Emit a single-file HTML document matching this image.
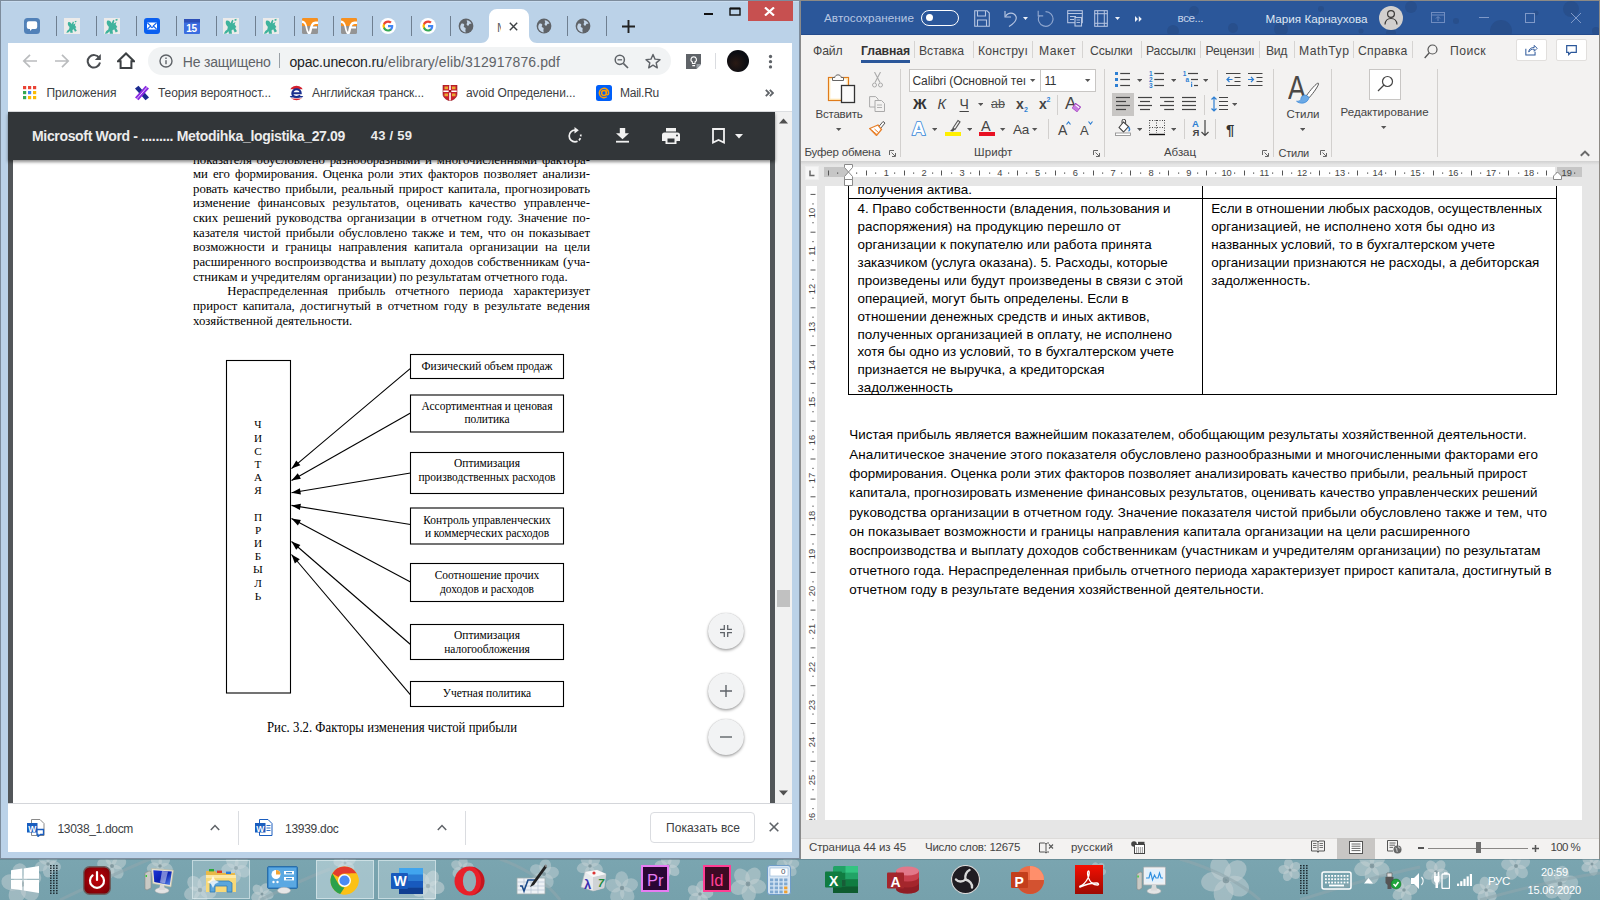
<!DOCTYPE html>
<html lang="ru"><head><meta charset="utf-8"><title>Desktop</title>
<style>
html,body{margin:0;padding:0}
body{width:1600px;height:900px;overflow:hidden;position:relative;background:#78a3ae;font-family:"Liberation Sans",sans-serif;}
.a{position:absolute;display:block}
.t{position:absolute;white-space:nowrap;line-height:1;margin:0;padding:0;color:#000}
</style></head>
<body>
<div class="a" style="left:0px;top:859px;width:1600px;height:41px;background:linear-gradient(#7aa5b0,#76a1ac);"></div>
<svg class="a" style="left:0;top:859px" width="1600" height="41" viewBox="0 0 1600 41"><ellipse cx="17.3" cy="34.5" rx="10.2" ry="8.2" transform="rotate(117 17.3 34.5)" fill="#c3d0d3" fill-opacity="0.52"/><ellipse cx="11.5" cy="23.4" rx="10.2" ry="8.2" transform="rotate(189 11.5 23.4)" fill="#c3d0d3" fill-opacity="0.52"/><ellipse cx="20.2" cy="14.5" rx="10.2" ry="8.2" transform="rotate(261 20.2 14.5)" fill="#c3d0d3" fill-opacity="0.52"/><ellipse cx="31.4" cy="20.1" rx="10.2" ry="8.2" transform="rotate(333 31.4 20.1)" fill="#c3d0d3" fill-opacity="0.52"/><ellipse cx="29.6" cy="32.4" rx="10.2" ry="8.2" transform="rotate(405 29.6 32.4)" fill="#c3d0d3" fill-opacity="0.52"/><circle cx="22" cy="25" r="2.8" fill="#5b737c" fill-opacity=".5"/><ellipse cx="44.0" cy="-0.5" rx="6.6" ry="5.2" transform="rotate(234 44.0 -0.5)" fill="#c3d0d3" fill-opacity="0.51"/><ellipse cx="52.0" cy="-0.5" rx="6.6" ry="5.2" transform="rotate(306 52.0 -0.5)" fill="#c3d0d3" fill-opacity="0.51"/><ellipse cx="54.5" cy="7.1" rx="6.6" ry="5.2" transform="rotate(378 54.5 7.1)" fill="#c3d0d3" fill-opacity="0.51"/><ellipse cx="48.0" cy="11.8" rx="6.6" ry="5.2" transform="rotate(450 48.0 11.8)" fill="#c3d0d3" fill-opacity="0.51"/><ellipse cx="41.5" cy="7.1" rx="6.6" ry="5.2" transform="rotate(522 41.5 7.1)" fill="#c3d0d3" fill-opacity="0.51"/><circle cx="48" cy="5" r="1.8" fill="#5b737c" fill-opacity=".5"/><ellipse cx="104.5" cy="5.3" rx="7.4" ry="5.9" transform="rotate(193 104.5 5.3)" fill="#c3d0d3" fill-opacity="0.54"/><ellipse cx="111.3" cy="-0.6" rx="7.4" ry="5.9" transform="rotate(265 111.3 -0.6)" fill="#c3d0d3" fill-opacity="0.54"/><ellipse cx="119.0" cy="4.0" rx="7.4" ry="5.9" transform="rotate(337 119.0 4.0)" fill="#c3d0d3" fill-opacity="0.54"/><ellipse cx="117.0" cy="12.8" rx="7.4" ry="5.9" transform="rotate(409 117.0 12.8)" fill="#c3d0d3" fill-opacity="0.54"/><ellipse cx="108.1" cy="13.6" rx="7.4" ry="5.9" transform="rotate(481 108.1 13.6)" fill="#c3d0d3" fill-opacity="0.54"/><circle cx="112" cy="7" r="2.0" fill="#5b737c" fill-opacity=".5"/><ellipse cx="166.4" cy="9.4" rx="6.6" ry="5.2" transform="rotate(21 166.4 9.4)" fill="#c3d0d3" fill-opacity="0.56"/><ellipse cx="159.7" cy="13.8" rx="6.6" ry="5.2" transform="rotate(93 159.7 13.8)" fill="#c3d0d3" fill-opacity="0.56"/><ellipse cx="153.4" cy="8.8" rx="6.6" ry="5.2" transform="rotate(165 153.4 8.8)" fill="#c3d0d3" fill-opacity="0.56"/><ellipse cx="156.3" cy="1.3" rx="6.6" ry="5.2" transform="rotate(237 156.3 1.3)" fill="#c3d0d3" fill-opacity="0.56"/><ellipse cx="164.3" cy="1.7" rx="6.6" ry="5.2" transform="rotate(309 164.3 1.7)" fill="#c3d0d3" fill-opacity="0.56"/><circle cx="160" cy="7" r="1.8" fill="#5b737c" fill-opacity=".5"/><ellipse cx="208.3" cy="33.0" rx="8.2" ry="6.6" transform="rotate(13 208.3 33.0)" fill="#c3d0d3" fill-opacity="0.55"/><ellipse cx="200.7" cy="39.5" rx="8.2" ry="6.6" transform="rotate(85 200.7 39.5)" fill="#c3d0d3" fill-opacity="0.55"/><ellipse cx="192.1" cy="34.3" rx="8.2" ry="6.6" transform="rotate(157 192.1 34.3)" fill="#c3d0d3" fill-opacity="0.55"/><ellipse cx="194.5" cy="24.5" rx="8.2" ry="6.6" transform="rotate(229 194.5 24.5)" fill="#c3d0d3" fill-opacity="0.55"/><ellipse cx="204.4" cy="23.8" rx="8.2" ry="6.6" transform="rotate(301 204.4 23.8)" fill="#c3d0d3" fill-opacity="0.55"/><circle cx="200" cy="31" r="2.2" fill="#5b737c" fill-opacity=".5"/><ellipse cx="242.9" cy="12.2" rx="7.4" ry="5.9" transform="rotate(25 242.9 12.2)" fill="#c3d0d3" fill-opacity="0.51"/><ellipse cx="235.1" cy="16.6" rx="7.4" ry="5.9" transform="rotate(97 235.1 16.6)" fill="#c3d0d3" fill-opacity="0.51"/><ellipse cx="228.5" cy="10.4" rx="7.4" ry="5.9" transform="rotate(169 228.5 10.4)" fill="#c3d0d3" fill-opacity="0.51"/><ellipse cx="232.3" cy="2.3" rx="7.4" ry="5.9" transform="rotate(241 232.3 2.3)" fill="#c3d0d3" fill-opacity="0.51"/><ellipse cx="241.2" cy="3.4" rx="7.4" ry="5.9" transform="rotate(313 241.2 3.4)" fill="#c3d0d3" fill-opacity="0.51"/><circle cx="236" cy="9" r="2.0" fill="#5b737c" fill-opacity=".5"/><ellipse cx="256.7" cy="37.7" rx="5.7" ry="4.6" transform="rotate(153 256.7 37.7)" fill="#c3d0d3" fill-opacity="0.60"/><ellipse cx="257.8" cy="30.8" rx="5.7" ry="4.6" transform="rotate(225 257.8 30.8)" fill="#c3d0d3" fill-opacity="0.60"/><ellipse cx="264.7" cy="29.7" rx="5.7" ry="4.6" transform="rotate(297 264.7 29.7)" fill="#c3d0d3" fill-opacity="0.60"/><ellipse cx="267.9" cy="35.9" rx="5.7" ry="4.6" transform="rotate(369 267.9 35.9)" fill="#c3d0d3" fill-opacity="0.60"/><ellipse cx="263.0" cy="40.9" rx="5.7" ry="4.6" transform="rotate(441 263.0 40.9)" fill="#c3d0d3" fill-opacity="0.60"/><circle cx="262" cy="35" r="1.5" fill="#5b737c" fill-opacity=".5"/><ellipse cx="349.2" cy="8.2" rx="5.7" ry="4.6" transform="rotate(45 349.2 8.2)" fill="#c3d0d3" fill-opacity="0.53"/><ellipse cx="342.3" cy="9.3" rx="5.7" ry="4.6" transform="rotate(117 342.3 9.3)" fill="#c3d0d3" fill-opacity="0.53"/><ellipse cx="339.1" cy="3.1" rx="5.7" ry="4.6" transform="rotate(189 339.1 3.1)" fill="#c3d0d3" fill-opacity="0.53"/><ellipse cx="344.0" cy="-1.9" rx="5.7" ry="4.6" transform="rotate(261 344.0 -1.9)" fill="#c3d0d3" fill-opacity="0.53"/><ellipse cx="350.3" cy="1.3" rx="5.7" ry="4.6" transform="rotate(333 350.3 1.3)" fill="#c3d0d3" fill-opacity="0.53"/><circle cx="345" cy="4" r="1.5" fill="#5b737c" fill-opacity=".5"/><ellipse cx="422.1" cy="20.9" rx="8.2" ry="6.6" transform="rotate(226 422.1 20.9)" fill="#c3d0d3" fill-opacity="0.61"/><ellipse cx="432.0" cy="19.5" rx="8.2" ry="6.6" transform="rotate(298 432.0 19.5)" fill="#c3d0d3" fill-opacity="0.61"/><ellipse cx="436.4" cy="28.4" rx="8.2" ry="6.6" transform="rotate(370 436.4 28.4)" fill="#c3d0d3" fill-opacity="0.61"/><ellipse cx="429.2" cy="35.4" rx="8.2" ry="6.6" transform="rotate(442 429.2 35.4)" fill="#c3d0d3" fill-opacity="0.61"/><ellipse cx="420.4" cy="30.8" rx="8.2" ry="6.6" transform="rotate(514 420.4 30.8)" fill="#c3d0d3" fill-opacity="0.61"/><circle cx="428" cy="27" r="2.2" fill="#5b737c" fill-opacity=".5"/><ellipse cx="456.7" cy="6.2" rx="5.7" ry="4.6" transform="rotate(208 456.7 6.2)" fill="#c3d0d3" fill-opacity="0.55"/><ellipse cx="463.0" cy="3.1" rx="5.7" ry="4.6" transform="rotate(280 463.0 3.1)" fill="#c3d0d3" fill-opacity="0.55"/><ellipse cx="467.9" cy="8.1" rx="5.7" ry="4.6" transform="rotate(352 467.9 8.1)" fill="#c3d0d3" fill-opacity="0.55"/><ellipse cx="464.6" cy="14.3" rx="5.7" ry="4.6" transform="rotate(424 464.6 14.3)" fill="#c3d0d3" fill-opacity="0.55"/><ellipse cx="457.7" cy="13.2" rx="5.7" ry="4.6" transform="rotate(496 457.7 13.2)" fill="#c3d0d3" fill-opacity="0.55"/><circle cx="462" cy="9" r="1.5" fill="#5b737c" fill-opacity=".5"/><ellipse cx="551.6" cy="13.8" rx="7.4" ry="5.9" transform="rotate(351 551.6 13.8)" fill="#c3d0d3" fill-opacity="0.51"/><ellipse cx="547.4" cy="21.8" rx="7.4" ry="5.9" transform="rotate(423 547.4 21.8)" fill="#c3d0d3" fill-opacity="0.51"/><ellipse cx="538.6" cy="20.4" rx="7.4" ry="5.9" transform="rotate(495 538.6 20.4)" fill="#c3d0d3" fill-opacity="0.51"/><ellipse cx="537.2" cy="11.5" rx="7.4" ry="5.9" transform="rotate(567 537.2 11.5)" fill="#c3d0d3" fill-opacity="0.51"/><ellipse cx="545.2" cy="7.4" rx="7.4" ry="5.9" transform="rotate(639 545.2 7.4)" fill="#c3d0d3" fill-opacity="0.51"/><circle cx="544" cy="15" r="2.0" fill="#5b737c" fill-opacity=".5"/><ellipse cx="594.3" cy="1.7" rx="6.6" ry="5.2" transform="rotate(309 594.3 1.7)" fill="#c3d0d3" fill-opacity="0.53"/><ellipse cx="596.4" cy="9.4" rx="6.6" ry="5.2" transform="rotate(381 596.4 9.4)" fill="#c3d0d3" fill-opacity="0.53"/><ellipse cx="589.7" cy="13.8" rx="6.6" ry="5.2" transform="rotate(453 589.7 13.8)" fill="#c3d0d3" fill-opacity="0.53"/><ellipse cx="583.4" cy="8.8" rx="6.6" ry="5.2" transform="rotate(525 583.4 8.8)" fill="#c3d0d3" fill-opacity="0.53"/><ellipse cx="586.3" cy="1.3" rx="6.6" ry="5.2" transform="rotate(597 586.3 1.3)" fill="#c3d0d3" fill-opacity="0.53"/><circle cx="590" cy="7" r="1.8" fill="#5b737c" fill-opacity=".5"/><ellipse cx="627.2" cy="35.7" rx="8.2" ry="6.6" transform="rotate(52 627.2 35.7)" fill="#c3d0d3" fill-opacity="0.51"/><ellipse cx="617.3" cy="36.1" rx="8.2" ry="6.6" transform="rotate(124 617.3 36.1)" fill="#c3d0d3" fill-opacity="0.51"/><ellipse cx="613.8" cy="26.7" rx="8.2" ry="6.6" transform="rotate(196 613.8 26.7)" fill="#c3d0d3" fill-opacity="0.51"/><ellipse cx="621.7" cy="20.5" rx="8.2" ry="6.6" transform="rotate(268 621.7 20.5)" fill="#c3d0d3" fill-opacity="0.51"/><ellipse cx="630.0" cy="26.1" rx="8.2" ry="6.6" transform="rotate(340 630.0 26.1)" fill="#c3d0d3" fill-opacity="0.51"/><circle cx="622" cy="29" r="2.2" fill="#5b737c" fill-opacity=".5"/><ellipse cx="665.6" cy="13.3" rx="6.6" ry="5.2" transform="rotate(111 665.6 13.3)" fill="#c3d0d3" fill-opacity="0.60"/><ellipse cx="661.2" cy="6.6" rx="6.6" ry="5.2" transform="rotate(183 661.2 6.6)" fill="#c3d0d3" fill-opacity="0.60"/><ellipse cx="666.2" cy="0.4" rx="6.6" ry="5.2" transform="rotate(255 666.2 0.4)" fill="#c3d0d3" fill-opacity="0.60"/><ellipse cx="673.7" cy="3.3" rx="6.6" ry="5.2" transform="rotate(327 673.7 3.3)" fill="#c3d0d3" fill-opacity="0.60"/><ellipse cx="673.3" cy="11.3" rx="6.6" ry="5.2" transform="rotate(399 673.3 11.3)" fill="#c3d0d3" fill-opacity="0.60"/><circle cx="668" cy="7" r="1.8" fill="#5b737c" fill-opacity=".5"/><ellipse cx="702.9" cy="41.2" rx="6.6" ry="5.2" transform="rotate(65 702.9 41.2)" fill="#c3d0d3" fill-opacity="0.57"/><ellipse cx="695.0" cy="39.6" rx="6.6" ry="5.2" transform="rotate(137 695.0 39.6)" fill="#c3d0d3" fill-opacity="0.57"/><ellipse cx="694.1" cy="31.7" rx="6.6" ry="5.2" transform="rotate(209 694.1 31.7)" fill="#c3d0d3" fill-opacity="0.57"/><ellipse cx="701.3" cy="28.3" rx="6.6" ry="5.2" transform="rotate(281 701.3 28.3)" fill="#c3d0d3" fill-opacity="0.57"/><ellipse cx="706.7" cy="34.2" rx="6.6" ry="5.2" transform="rotate(353 706.7 34.2)" fill="#c3d0d3" fill-opacity="0.57"/><circle cx="700" cy="35" r="1.8" fill="#5b737c" fill-opacity=".5"/><ellipse cx="742.0" cy="17.8" rx="9.0" ry="7.2" transform="rotate(230 742.0 17.8)" fill="#c3d0d3" fill-opacity="0.54"/><ellipse cx="752.9" cy="17.1" rx="9.0" ry="7.2" transform="rotate(302 752.9 17.1)" fill="#c3d0d3" fill-opacity="0.54"/><ellipse cx="757.1" cy="27.2" rx="9.0" ry="7.2" transform="rotate(374 757.1 27.2)" fill="#c3d0d3" fill-opacity="0.54"/><ellipse cx="748.7" cy="34.3" rx="9.0" ry="7.2" transform="rotate(446 748.7 34.3)" fill="#c3d0d3" fill-opacity="0.54"/><ellipse cx="739.3" cy="28.5" rx="9.0" ry="7.2" transform="rotate(518 739.3 28.5)" fill="#c3d0d3" fill-opacity="0.54"/><circle cx="748" cy="25" r="2.4" fill="#5b737c" fill-opacity=".5"/><ellipse cx="782.3" cy="5.3" rx="5.7" ry="4.6" transform="rotate(197 782.3 5.3)" fill="#c3d0d3" fill-opacity="0.51"/><ellipse cx="787.9" cy="1.1" rx="5.7" ry="4.6" transform="rotate(269 787.9 1.1)" fill="#c3d0d3" fill-opacity="0.51"/><ellipse cx="793.6" cy="5.1" rx="5.7" ry="4.6" transform="rotate(341 793.6 5.1)" fill="#c3d0d3" fill-opacity="0.51"/><ellipse cx="791.6" cy="11.8" rx="5.7" ry="4.6" transform="rotate(413 791.6 11.8)" fill="#c3d0d3" fill-opacity="0.51"/><ellipse cx="784.6" cy="11.9" rx="5.7" ry="4.6" transform="rotate(485 784.6 11.9)" fill="#c3d0d3" fill-opacity="0.51"/><circle cx="788" cy="7" r="1.5" fill="#5b737c" fill-opacity=".5"/><ellipse cx="1102.0" cy="12.6" rx="4.1" ry="3.3" transform="rotate(21 1102.0 12.6)" fill="#c3d0d3" fill-opacity="0.52"/><ellipse cx="1097.7" cy="15.2" rx="4.1" ry="3.3" transform="rotate(93 1097.7 15.2)" fill="#c3d0d3" fill-opacity="0.52"/><ellipse cx="1093.9" cy="12.1" rx="4.1" ry="3.3" transform="rotate(165 1093.9 12.1)" fill="#c3d0d3" fill-opacity="0.52"/><ellipse cx="1095.7" cy="7.4" rx="4.1" ry="3.3" transform="rotate(237 1095.7 7.4)" fill="#c3d0d3" fill-opacity="0.52"/><ellipse cx="1100.7" cy="7.7" rx="4.1" ry="3.3" transform="rotate(309 1100.7 7.7)" fill="#c3d0d3" fill-opacity="0.52"/><circle cx="1098" cy="11" r="1.1" fill="#5b737c" fill-opacity=".5"/><ellipse cx="1220.6" cy="9.5" rx="12.3" ry="9.8" transform="rotate(245 1220.6 9.5)" fill="#c3d0d3" fill-opacity="0.55"/><ellipse cx="1235.3" cy="12.3" rx="12.3" ry="9.8" transform="rotate(317 1235.3 12.3)" fill="#c3d0d3" fill-opacity="0.55"/><ellipse cx="1237.2" cy="27.1" rx="12.3" ry="9.8" transform="rotate(389 1237.2 27.1)" fill="#c3d0d3" fill-opacity="0.55"/><ellipse cx="1223.6" cy="33.5" rx="12.3" ry="9.8" transform="rotate(461 1223.6 33.5)" fill="#c3d0d3" fill-opacity="0.55"/><ellipse cx="1213.4" cy="22.6" rx="12.3" ry="9.8" transform="rotate(533 1213.4 22.6)" fill="#c3d0d3" fill-opacity="0.55"/><circle cx="1226" cy="21" r="3.3" fill="#5b737c" fill-opacity=".5"/><ellipse cx="1287.7" cy="16.5" rx="5.7" ry="4.6" transform="rotate(113 1287.7 16.5)" fill="#c3d0d3" fill-opacity="0.57"/><ellipse cx="1284.1" cy="10.5" rx="5.7" ry="4.6" transform="rotate(185 1284.1 10.5)" fill="#c3d0d3" fill-opacity="0.57"/><ellipse cx="1288.7" cy="5.2" rx="5.7" ry="4.6" transform="rotate(257 1288.7 5.2)" fill="#c3d0d3" fill-opacity="0.57"/><ellipse cx="1295.1" cy="7.9" rx="5.7" ry="4.6" transform="rotate(329 1295.1 7.9)" fill="#c3d0d3" fill-opacity="0.57"/><ellipse cx="1294.5" cy="14.9" rx="5.7" ry="4.6" transform="rotate(401 1294.5 14.9)" fill="#c3d0d3" fill-opacity="0.57"/><circle cx="1290" cy="11" r="1.5" fill="#5b737c" fill-opacity=".5"/><ellipse cx="1363.1" cy="9.7" rx="9.0" ry="7.2" transform="rotate(163 1363.1 9.7)" fill="#c3d0d3" fill-opacity="0.54"/><ellipse cx="1366.6" cy="-0.7" rx="9.0" ry="7.2" transform="rotate(235 1366.6 -0.7)" fill="#c3d0d3" fill-opacity="0.54"/><ellipse cx="1377.6" cy="-0.5" rx="9.0" ry="7.2" transform="rotate(307 1377.6 -0.5)" fill="#c3d0d3" fill-opacity="0.54"/><ellipse cx="1380.8" cy="10.1" rx="9.0" ry="7.2" transform="rotate(379 1380.8 10.1)" fill="#c3d0d3" fill-opacity="0.54"/><ellipse cx="1371.8" cy="16.3" rx="9.0" ry="7.2" transform="rotate(451 1371.8 16.3)" fill="#c3d0d3" fill-opacity="0.54"/><circle cx="1372" cy="7" r="2.4" fill="#5b737c" fill-opacity=".5"/><ellipse cx="1405.9" cy="24.5" rx="6.6" ry="5.2" transform="rotate(286 1405.9 24.5)" fill="#c3d0d3" fill-opacity="0.58"/><ellipse cx="1410.8" cy="30.7" rx="6.6" ry="5.2" transform="rotate(358 1410.8 30.7)" fill="#c3d0d3" fill-opacity="0.58"/><ellipse cx="1406.3" cy="37.4" rx="6.6" ry="5.2" transform="rotate(430 1406.3 37.4)" fill="#c3d0d3" fill-opacity="0.58"/><ellipse cx="1398.7" cy="35.2" rx="6.6" ry="5.2" transform="rotate(502 1398.7 35.2)" fill="#c3d0d3" fill-opacity="0.58"/><ellipse cx="1398.4" cy="27.2" rx="6.6" ry="5.2" transform="rotate(574 1398.4 27.2)" fill="#c3d0d3" fill-opacity="0.58"/><circle cx="1404" cy="31" r="1.8" fill="#5b737c" fill-opacity=".5"/><ellipse cx="1436.3" cy="19.8" rx="6.6" ry="5.2" transform="rotate(88 1436.3 19.8)" fill="#c3d0d3" fill-opacity="0.57"/><ellipse cx="1429.6" cy="15.3" rx="6.6" ry="5.2" transform="rotate(160 1429.6 15.3)" fill="#c3d0d3" fill-opacity="0.57"/><ellipse cx="1431.8" cy="7.7" rx="6.6" ry="5.2" transform="rotate(232 1431.8 7.7)" fill="#c3d0d3" fill-opacity="0.57"/><ellipse cx="1439.8" cy="7.4" rx="6.6" ry="5.2" transform="rotate(304 1439.8 7.4)" fill="#c3d0d3" fill-opacity="0.57"/><ellipse cx="1442.5" cy="14.9" rx="6.6" ry="5.2" transform="rotate(376 1442.5 14.9)" fill="#c3d0d3" fill-opacity="0.57"/><circle cx="1436" cy="13" r="1.8" fill="#5b737c" fill-opacity=".5"/><ellipse cx="1479.3" cy="29.9" rx="6.6" ry="5.2" transform="rotate(189 1479.3 29.9)" fill="#c3d0d3" fill-opacity="0.61"/><ellipse cx="1484.9" cy="24.3" rx="6.6" ry="5.2" transform="rotate(261 1484.9 24.3)" fill="#c3d0d3" fill-opacity="0.61"/><ellipse cx="1492.1" cy="27.9" rx="6.6" ry="5.2" transform="rotate(333 1492.1 27.9)" fill="#c3d0d3" fill-opacity="0.61"/><ellipse cx="1490.8" cy="35.8" rx="6.6" ry="5.2" transform="rotate(405 1490.8 35.8)" fill="#c3d0d3" fill-opacity="0.61"/><ellipse cx="1482.9" cy="37.1" rx="6.6" ry="5.2" transform="rotate(477 1482.9 37.1)" fill="#c3d0d3" fill-opacity="0.61"/><circle cx="1486" cy="31" r="1.8" fill="#5b737c" fill-opacity=".5"/><ellipse cx="1515.0" cy="-0.6" rx="7.4" ry="5.9" transform="rotate(262 1515.0 -0.6)" fill="#c3d0d3" fill-opacity="0.53"/><ellipse cx="1522.9" cy="3.7" rx="7.4" ry="5.9" transform="rotate(334 1522.9 3.7)" fill="#c3d0d3" fill-opacity="0.53"/><ellipse cx="1521.3" cy="12.5" rx="7.4" ry="5.9" transform="rotate(406 1521.3 12.5)" fill="#c3d0d3" fill-opacity="0.53"/><ellipse cx="1512.4" cy="13.7" rx="7.4" ry="5.9" transform="rotate(478 1512.4 13.7)" fill="#c3d0d3" fill-opacity="0.53"/><ellipse cx="1508.5" cy="5.6" rx="7.4" ry="5.9" transform="rotate(550 1508.5 5.6)" fill="#c3d0d3" fill-opacity="0.53"/><circle cx="1516" cy="7" r="2.0" fill="#5b737c" fill-opacity=".5"/><ellipse cx="1569.3" cy="23.8" rx="9.0" ry="7.2" transform="rotate(353 1569.3 23.8)" fill="#c3d0d3" fill-opacity="0.51"/><ellipse cx="1564.0" cy="33.5" rx="9.0" ry="7.2" transform="rotate(425 1564.0 33.5)" fill="#c3d0d3" fill-opacity="0.51"/><ellipse cx="1553.2" cy="31.4" rx="9.0" ry="7.2" transform="rotate(497 1553.2 31.4)" fill="#c3d0d3" fill-opacity="0.51"/><ellipse cx="1551.8" cy="20.5" rx="9.0" ry="7.2" transform="rotate(569 1551.8 20.5)" fill="#c3d0d3" fill-opacity="0.51"/><ellipse cx="1561.7" cy="15.8" rx="9.0" ry="7.2" transform="rotate(641 1561.7 15.8)" fill="#c3d0d3" fill-opacity="0.51"/><circle cx="1560" cy="25" r="2.4" fill="#5b737c" fill-opacity=".5"/><ellipse cx="1586.8" cy="7.9" rx="5.7" ry="4.6" transform="rotate(150 1586.8 7.9)" fill="#c3d0d3" fill-opacity="0.59"/><ellipse cx="1587.6" cy="1.0" rx="5.7" ry="4.6" transform="rotate(222 1587.6 1.0)" fill="#c3d0d3" fill-opacity="0.59"/><ellipse cx="1594.5" cy="-0.4" rx="5.7" ry="4.6" transform="rotate(294 1594.5 -0.4)" fill="#c3d0d3" fill-opacity="0.59"/><ellipse cx="1597.9" cy="5.7" rx="5.7" ry="4.6" transform="rotate(366 1597.9 5.7)" fill="#c3d0d3" fill-opacity="0.59"/><ellipse cx="1593.2" cy="10.8" rx="5.7" ry="4.6" transform="rotate(438 1593.2 10.8)" fill="#c3d0d3" fill-opacity="0.59"/><circle cx="1592" cy="5" r="1.5" fill="#5b737c" fill-opacity=".5"/><path d="M60 41Q115.0 14.5 150 0" fill="none" stroke="#8fa6ad" stroke-opacity=".6" stroke-width="3"/><path d="M260 41Q305.0 19.5 330 10" fill="none" stroke="#8fa6ad" stroke-opacity=".6" stroke-width="3"/><path d="M500 0Q540.0 14.5 560 41" fill="none" stroke="#8fa6ad" stroke-opacity=".6" stroke-width="3"/><path d="M1180 0Q1230.0 14.5 1260 41" fill="none" stroke="#8fa6ad" stroke-opacity=".6" stroke-width="3"/><path d="M1300 41Q1370.0 18.5 1420 8" fill="none" stroke="#8fa6ad" stroke-opacity=".6" stroke-width="3"/><path d="M1480 41Q1550.0 21.5 1600 14" fill="none" stroke="#8fa6ad" stroke-opacity=".6" stroke-width="3"/></svg>
<div class="a" style="left:0px;top:859px;width:1600px;height:1px;background:rgba(90,120,132,.55);"></div>
<svg class="a" style="left:11px;top:866px;" width="28" height="27" viewBox="0 0 28 27"><path d="M0 4.2 11.3 2.6V12.7H0zM12.7 2.4 28 0V12.7H12.7zM0 14.1H11.3V24.3L0 22.7zM12.7 14.1H28V27L12.7 24.5z" fill="#fff"/></svg>
<svg class="a" style="left:50px;top:865px;" width="9" height="31" viewBox="0 0 9 31"><g fill="#1d2a30"><rect x="0" y="0.0" width="1.6" height="1.4"/><rect x="0" y="2.5" width="1.6" height="1.4"/><rect x="0" y="5.0" width="1.6" height="1.4"/><rect x="0" y="7.5" width="1.6" height="1.4"/><rect x="0" y="10.0" width="1.6" height="1.4"/><rect x="0" y="12.5" width="1.6" height="1.4"/><rect x="0" y="15.0" width="1.6" height="1.4"/><rect x="0" y="17.5" width="1.6" height="1.4"/><rect x="0" y="20.0" width="1.6" height="1.4"/><rect x="0" y="22.5" width="1.6" height="1.4"/><rect x="0" y="25.0" width="1.6" height="1.4"/><rect x="0" y="27.5" width="1.6" height="1.4"/><rect x="3" y="0.0" width="1.6" height="1.4"/><rect x="3" y="2.5" width="1.6" height="1.4"/><rect x="3" y="5.0" width="1.6" height="1.4"/><rect x="3" y="7.5" width="1.6" height="1.4"/><rect x="3" y="10.0" width="1.6" height="1.4"/><rect x="3" y="12.5" width="1.6" height="1.4"/><rect x="3" y="15.0" width="1.6" height="1.4"/><rect x="3" y="17.5" width="1.6" height="1.4"/><rect x="3" y="20.0" width="1.6" height="1.4"/><rect x="3" y="22.5" width="1.6" height="1.4"/><rect x="3" y="25.0" width="1.6" height="1.4"/><rect x="3" y="27.5" width="1.6" height="1.4"/><rect x="6" y="0.0" width="1.6" height="1.4"/><rect x="6" y="2.5" width="1.6" height="1.4"/><rect x="6" y="5.0" width="1.6" height="1.4"/><rect x="6" y="7.5" width="1.6" height="1.4"/><rect x="6" y="10.0" width="1.6" height="1.4"/><rect x="6" y="12.5" width="1.6" height="1.4"/><rect x="6" y="15.0" width="1.6" height="1.4"/><rect x="6" y="17.5" width="1.6" height="1.4"/><rect x="6" y="20.0" width="1.6" height="1.4"/><rect x="6" y="22.5" width="1.6" height="1.4"/><rect x="6" y="25.0" width="1.6" height="1.4"/><rect x="6" y="27.5" width="1.6" height="1.4"/></g></svg>
<svg class="a" style="left:1300px;top:865px;" width="9" height="31" viewBox="0 0 9 31"><g fill="#1d2a30"><rect x="0" y="0.0" width="1.6" height="1.4"/><rect x="0" y="2.5" width="1.6" height="1.4"/><rect x="0" y="5.0" width="1.6" height="1.4"/><rect x="0" y="7.5" width="1.6" height="1.4"/><rect x="0" y="10.0" width="1.6" height="1.4"/><rect x="0" y="12.5" width="1.6" height="1.4"/><rect x="0" y="15.0" width="1.6" height="1.4"/><rect x="0" y="17.5" width="1.6" height="1.4"/><rect x="0" y="20.0" width="1.6" height="1.4"/><rect x="0" y="22.5" width="1.6" height="1.4"/><rect x="0" y="25.0" width="1.6" height="1.4"/><rect x="0" y="27.5" width="1.6" height="1.4"/><rect x="3" y="0.0" width="1.6" height="1.4"/><rect x="3" y="2.5" width="1.6" height="1.4"/><rect x="3" y="5.0" width="1.6" height="1.4"/><rect x="3" y="7.5" width="1.6" height="1.4"/><rect x="3" y="10.0" width="1.6" height="1.4"/><rect x="3" y="12.5" width="1.6" height="1.4"/><rect x="3" y="15.0" width="1.6" height="1.4"/><rect x="3" y="17.5" width="1.6" height="1.4"/><rect x="3" y="20.0" width="1.6" height="1.4"/><rect x="3" y="22.5" width="1.6" height="1.4"/><rect x="3" y="25.0" width="1.6" height="1.4"/><rect x="3" y="27.5" width="1.6" height="1.4"/><rect x="6" y="0.0" width="1.6" height="1.4"/><rect x="6" y="2.5" width="1.6" height="1.4"/><rect x="6" y="5.0" width="1.6" height="1.4"/><rect x="6" y="7.5" width="1.6" height="1.4"/><rect x="6" y="10.0" width="1.6" height="1.4"/><rect x="6" y="12.5" width="1.6" height="1.4"/><rect x="6" y="15.0" width="1.6" height="1.4"/><rect x="6" y="17.5" width="1.6" height="1.4"/><rect x="6" y="20.0" width="1.6" height="1.4"/><rect x="6" y="22.5" width="1.6" height="1.4"/><rect x="6" y="25.0" width="1.6" height="1.4"/><rect x="6" y="27.5" width="1.6" height="1.4"/></g></svg>
<svg class="a" style="left:83px;top:866px;" width="28" height="29" viewBox="0 0 28 29"><defs><radialGradient id="pw" cx=".5" cy=".45" r=".6"><stop offset="0" stop-color="#c4000a"/><stop offset="1" stop-color="#7d0006"/></radialGradient></defs><rect x=".7" y=".7" width="26.6" height="27.6" rx="6" fill="url(#pw)" stroke="#6a6060" stroke-width="1.4"/><path d="M9.6 9.4a7 7 0 1 0 8.8 0" fill="none" stroke="#fff" stroke-width="2.2" stroke-linecap="round"/><path d="M14 6v8" stroke="#fff" stroke-width="2.2" stroke-linecap="round"/></svg>
<svg class="a" style="left:144px;top:866px;" width="31" height="28" viewBox="0 0 31 28"><defs><linearGradient id="scr" x1="0" y1="0" x2="1" y2="1"><stop offset="0" stop-color="#1d35d8"/><stop offset=".5" stop-color="#0a1fb0"/><stop offset="1" stop-color="#5b8df0"/></linearGradient></defs><path d="M1 7l4-2 2 .5V22l-4 2-2-1z" fill="#c9c9c4" stroke="#8a8a86" stroke-width=".6"/><rect x="1.6" y="9" width="1.4" height="2" fill="#3c3"/><path d="M7.5 2.5 29.5 4.2 27 21 8.8 17.5z" fill="#e9e6d4" stroke="#b8b49c" stroke-width=".6"/><path d="M9.3 4.3 27.8 5.6 25.8 19 10.3 16z" fill="url(#scr)"/><path d="M18 5l6 .4-3 12-5-1z" fill="#fff" opacity=".45"/><ellipse cx="18" cy="24.5" rx="7" ry="3" fill="#e4e4e4" stroke="#aaa" stroke-width=".5"/><path d="M16 19h4l1 5h-6z" fill="#d8d8d8"/></svg>
<div class="a" style="left:192px;top:860px;width:58px;height:39px;background:rgba(225,238,242,0.22);box-shadow:inset 0 0 0 1px rgba(235,245,248,.55);"></div>
<svg class="a" style="left:205px;top:866px;" width="32" height="28" viewBox="0 0 32 28"><path d="M1 5h9l2 2h18v19H1z" fill="#e9b948"/><path d="M1 9h30v17H1z" fill="#f8d978"/><path d="M1 9h30v3H1z" fill="#fce9a8"/><rect x="4" y="3" width="5" height="2.4" fill="#2aa836"/><rect x="12" y="4.6" width="5" height="2.4" fill="#d83b2a"/><rect x="21" y="5.6" width="5" height="2.4" fill="#2a7bd8"/><path d="M5 26v-9l3-2h16l3 2v9h-5v-6H10v6z" fill="#5aa6dc" stroke="#2d78b4" stroke-width=".8"/><path d="M6 14l2-4 2 4 4 2-4 2-2 4-2-4-4-2z" fill="#fff" opacity=".8"/></svg>
<svg class="a" style="left:267px;top:866px;" width="31" height="28" viewBox="0 0 31 28"><rect x=".5" y=".5" width="30" height="22" rx="1.5" fill="#3f8fd0" stroke="#2a6ea8"/><rect x="2" y="2" width="27" height="19" fill="#5aa8e2"/><circle cx="9" cy="8.5" r="4.5" fill="#fff"/><path d="M9 8.5V4a4.5 4.5 0 0 1 4.5 4.5z" fill="#f4a431"/><rect x="17" y="5" width="10" height="3.4" fill="#fff"/><rect x="17" y="11" width="10" height="3.4" fill="#fff"/><rect x="19" y="6" width="6" height="1.4" fill="#3f8fd0"/><rect x="19" y="12" width="6" height="1.4" fill="#3f8fd0"/><circle cx="6.5" cy="16" r="1.2" fill="#fff"/><circle cx="10.5" cy="16" r="1.2" fill="#fff"/><ellipse cx="17" cy="24.5" rx="6.5" ry="3.2" fill="#e6e6e6" stroke="#aaa" stroke-width=".5"/></svg>
<div class="a" style="left:316px;top:860px;width:58px;height:39px;background:rgba(225,238,242,0.42);box-shadow:inset 0 0 0 1px rgba(235,245,248,.55);"></div>
<svg class="a" style="left:330px;top:866px;" width="29" height="29" viewBox="0 0 29 29"><circle cx="14.5" cy="14.5" r="14" fill="#fbc116"/><path d="M14.5 .5A14 14 0 0 1 26.7 7.5H14.5a7 7 0 0 0-6.1 3.6L2.4 7.4A14 14 0 0 1 14.5 .5z" fill="#e33b2e"/><path d="M2.4 7.4 8.5 18a7 7 0 0 0 6 3.5l-4.3 6.4A14 14 0 0 1 2.4 7.4z" fill="#2ba14b"/><path d="M26.7 7.5A14 14 0 0 1 12 28.3L18.5 18a7 7 0 0 0 0-7L20.5 7.5z" fill="#fbc116"/><circle cx="14.5" cy="14.5" r="6.5" fill="#fff"/><circle cx="14.5" cy="14.5" r="5.1" fill="#4a8af4"/></svg>
<div class="a" style="left:378px;top:860px;width:58px;height:39px;background:rgba(225,238,242,0.3);box-shadow:inset 0 0 0 1px rgba(235,245,248,.55);"></div>
<svg class="a" style="left:391px;top:868px;" width="32" height="26" viewBox="0 0 32 26"><rect x="8" y="0" width="24" height="26" rx="1.5" fill="#2b7cd3"/><rect x="8" y="0" width="24" height="6.5" fill="#41a5ee"/><rect x="8" y="13" width="24" height="6.5" fill="#185abd"/><rect x="8" y="19.5" width="24" height="6.5" fill="#103f91"/><rect x="0" y="5" width="17" height="16" rx="1" fill="#185abd"/></svg>
<div class="t" style="top:873.7px;font-size:14px;left:393.5px;font-weight:700;color:#fff;">W</div>
<svg class="a" style="left:454px;top:866px;" width="31" height="30" viewBox="0 0 31 30"><ellipse cx="15.5" cy="15" rx="15" ry="14.6" fill="#e8202a"/><ellipse cx="15.5" cy="15" rx="6.6" ry="10.6" fill="#8fb0b8"/><path d="M15.5 .4a15 14.6 0 0 1 0 29.2A11 14 0 0 0 15.5 .4z" fill="#a70e16" opacity=".55"/></svg>
<svg class="a" style="left:515px;top:864px;" width="32" height="31" viewBox="0 0 32 31"><path d="M2 14h28v16H2z" fill="#eef2f6" stroke="#9aa" stroke-width=".8"/><path d="M2 18h28M2 22h28M2 26h28M9 14v16M16 14v16M23 14v16" stroke="#b4c4d4" stroke-width=".7"/><path d="M5 22l2 0 2 5 4-11h9" fill="none" stroke="#1b4a8a" stroke-width="1.6"/><path d="M30 1 17 19l-2 4 4-2L32 3z" fill="#222"/><path d="M30 1l2 2" stroke="#888" stroke-width="2"/></svg>
<svg class="a" style="left:579px;top:868px;" width="29" height="24" viewBox="0 0 29 24"><path d="M6 4 18 2l9 4-2 14-11 3L2 19z" fill="#e8eaec" stroke="#b8bcc0" stroke-width=".6"/><path d="M14 9l0 14 11-3 2-14z" fill="#cfd3d6"/><path d="M6 4l8 5 13-3-9-4z" fill="#f6f7f8"/><circle cx="15" cy="5" r="1.6" fill="#d33"/></svg>
<div class="t" style="top:877.55px;font-size:13px;left:584px;font-weight:700;color:#3a2fb0;">λ</div>
<div class="t" style="top:878.24px;font-size:11px;left:598px;font-weight:700;color:#1f8a3a;font-style:italic;">7</div>
<div class="a" style="left:641px;top:865px;width:28px;height:27px;background:#2a0634;border:2px solid #e77cf3;box-sizing:border-box;"></div>
<div class="t" style="top:872.08px;font-size:16.5px;left:647px;color:#e77cf3;letter-spacing:-0.05px;">Pr</div>
<div class="a" style="left:703px;top:865px;width:28px;height:27px;background:#3d0a24;border:2px solid #ff3f94;box-sizing:border-box;"></div>
<div class="t" style="top:872.08px;font-size:16.5px;left:710px;color:#ff3f94;letter-spacing:-0.383px;">Id</div>
<svg class="a" style="left:767px;top:865px;" width="24" height="30" viewBox="0 0 24 30"><rect x=".5" y=".5" width="23" height="29" rx="2.5" fill="#d7e6f4" stroke="#6f9cc8"/><rect x="3" y="3" width="18" height="8" fill="#fff" stroke="#8fb4d8" stroke-width=".6"/><rect x="3.0" y="13.5" width="3.3" height="2.8" fill="#7fa8d0"/><rect x="3.0" y="17.5" width="3.3" height="2.8" fill="#7fa8d0"/><rect x="3.0" y="21.5" width="3.3" height="2.8" fill="#7fa8d0"/><rect x="3.0" y="25.5" width="3.3" height="2.8" fill="#7fa8d0"/><rect x="7.7" y="13.5" width="3.3" height="2.8" fill="#7fa8d0"/><rect x="7.7" y="17.5" width="3.3" height="2.8" fill="#7fa8d0"/><rect x="7.7" y="21.5" width="3.3" height="2.8" fill="#7fa8d0"/><rect x="7.7" y="25.5" width="3.3" height="2.8" fill="#7fa8d0"/><rect x="12.4" y="13.5" width="3.3" height="2.8" fill="#7fa8d0"/><rect x="12.4" y="17.5" width="3.3" height="2.8" fill="#7fa8d0"/><rect x="12.4" y="21.5" width="3.3" height="2.8" fill="#7fa8d0"/><rect x="12.4" y="25.5" width="3.3" height="2.8" fill="#7fa8d0"/><rect x="17.1" y="13.5" width="3.3" height="2.8" fill="#7fa8d0"/><rect x="17.1" y="17.5" width="3.3" height="2.8" fill="#7fa8d0"/><rect x="17.1" y="21.5" width="3.3" height="2.8" fill="#f0a030"/><rect x="17.1" y="25.5" width="3.3" height="2.8" fill="#f0a030"/></svg>
<div class="t" style="top:867.78px;font-size:8px;left:781px;color:#456;">0</div>
<svg class="a" style="left:825px;top:866px;" width="33" height="27" viewBox="0 0 33 27"><rect x="8" y="0" width="25" height="27" rx="1.5" fill="#21a366"/><rect x="20.5" y="0" width="12.5" height="6.8" fill="#33c481"/><rect x="8" y="6.8" width="12.5" height="6.8" fill="#107c41"/><rect x="20.5" y="6.8" width="12.5" height="6.8" fill="#21a366"/><rect x="8" y="13.6" width="25" height="6.8" fill="#185c37"/><rect x="20.5" y="13.6" width="12.5" height="6.8" fill="#107c41"/><rect x="8" y="20.4" width="25" height="6.6" fill="#0e5c2f"/><rect x="0" y="5.5" width="17" height="16" rx="1" fill="#107c41"/></svg>
<div class="t" style="top:873.7px;font-size:14px;left:829px;font-weight:700;color:#fff;">X</div>
<svg class="a" style="left:887px;top:866px;" width="32" height="28" viewBox="0 0 32 28"><path d="M9 5v18a11.5 4.6 0 0 0 23 0V5z" fill="#a4262c"/><path d="M9 11a11.5 4.6 0 0 0 23 0V5H9z" fill="#c8404e"/><ellipse cx="20.5" cy="5" rx="11.5" ry="4.6" fill="#e2788a"/><path d="M9 17a11.5 4.6 0 0 0 23 0v6a11.5 4.6 0 0 1-23 0z" fill="#8f1d25"/><rect x="0" y="6.5" width="17" height="16" rx="1" fill="#a4262c"/></svg>
<div class="t" style="top:874.7px;font-size:14px;left:890.5px;font-weight:700;color:#fff;">A</div>
<svg class="a" style="left:951px;top:865px;" width="29" height="29" viewBox="0 0 29 29"><circle cx="14.5" cy="14.5" r="14" fill="#1f1c22" stroke="#d8d8d8" stroke-width="1.2"/><g fill="none" stroke="#d8d8d8" stroke-width="2.4" stroke-linecap="round"><path d="M14.5 14.5c-1-4 1-8 4-9.5"/><path d="M14.5 14.5c4 1 7 4.500 6.500 8"/><path d="M14.5 14.5c-3 3-7.500 2.500-9.500 0"/></g></svg>
<svg class="a" style="left:1011px;top:866px;" width="33" height="28" viewBox="0 0 33 28"><circle cx="19" cy="14" r="14" fill="#ed6c47"/><path d="M19 0a14 14 0 0 1 14 14H19z" fill="#ff8f6b"/><path d="M5 14a14 14 0 0 0 28 0z" fill="#d35230"/><rect x="0" y="6" width="17" height="16" rx="1" fill="#c43e1c"/></svg>
<div class="t" style="top:874.7px;font-size:14px;left:1014.5px;font-weight:700;color:#fff;">P</div>
<svg class="a" style="left:1075px;top:865px;" width="28" height="29" viewBox="0 0 28 29"><defs><linearGradient id="ac" x1="0" y1="0" x2="0" y2="1"><stop offset="0" stop-color="#f40f02"/><stop offset="1" stop-color="#9d0a02"/></linearGradient></defs><rect width="28" height="29" fill="url(#ac)"/><path d="M5 21c3-1 6-4 8-8 1.500-3 1.500-7 .5-7s-1.500 3 0 7c1.500 4 5 7 9 7 2 0 1-2-1-2-5 0-11 1.500-16 4-1 .6-1 -.5-.5-1z" fill="none" stroke="#fff" stroke-width="1.3"/></svg>
<svg class="a" style="left:1136px;top:866px;" width="31" height="29" viewBox="0 0 31 29"><path d="M1 8l3-2 2 .5V22l-3 2-2-1z" fill="#c9c9c4" stroke="#8a8a86" stroke-width=".6"/><rect x="1.400" y="9.500" width="1.400" height="2" fill="#3c3"/><rect x="7.500" y="1" width="22" height="18" rx="1" fill="#eef0f2" stroke="#a8acb0" stroke-width=".8"/><rect x="9.500" y="3" width="18" height="13.500" fill="#e3f0fb"/><path d="M10 12h3l1.500-6 2 8 2-5 1.500 3h2l1.500-5 1.500 5h2" fill="none" stroke="#2f8fe0" stroke-width="1.1"/><ellipse cx="18" cy="25" rx="7" ry="3" fill="#e4e4e4" stroke="#aaa" stroke-width=".5"/><path d="M16 19h4l1 5.500h-6z" fill="#d8d8d8"/></svg>
<svg class="a" style="left:1321px;top:871px;" width="31" height="19" viewBox="0 0 31 19"><rect x="1" y="1" width="29" height="17" rx="2" fill="none" stroke="#fff" stroke-width="1.500"/><rect x="4.0" y="4.0" width="1.800" height="1.800" fill="#fff"/><rect x="4.0" y="7.3" width="1.800" height="1.800" fill="#fff"/><rect x="4.0" y="10.6" width="1.800" height="1.800" fill="#fff"/><rect x="7.1" y="4.0" width="1.800" height="1.800" fill="#fff"/><rect x="7.1" y="7.3" width="1.800" height="1.800" fill="#fff"/><rect x="7.1" y="10.6" width="1.800" height="1.800" fill="#fff"/><rect x="10.2" y="4.0" width="1.800" height="1.800" fill="#fff"/><rect x="10.2" y="7.3" width="1.800" height="1.800" fill="#fff"/><rect x="10.2" y="10.6" width="1.800" height="1.800" fill="#fff"/><rect x="13.3" y="4.0" width="1.800" height="1.800" fill="#fff"/><rect x="13.3" y="7.3" width="1.800" height="1.800" fill="#fff"/><rect x="13.3" y="10.6" width="1.800" height="1.800" fill="#fff"/><rect x="16.4" y="4.0" width="1.800" height="1.800" fill="#fff"/><rect x="16.4" y="7.3" width="1.800" height="1.800" fill="#fff"/><rect x="16.4" y="10.6" width="1.800" height="1.800" fill="#fff"/><rect x="19.5" y="4.0" width="1.800" height="1.800" fill="#fff"/><rect x="19.5" y="7.3" width="1.800" height="1.800" fill="#fff"/><rect x="19.5" y="10.6" width="1.800" height="1.800" fill="#fff"/><rect x="22.6" y="4.0" width="1.800" height="1.800" fill="#fff"/><rect x="22.6" y="7.3" width="1.800" height="1.800" fill="#fff"/><rect x="22.6" y="10.6" width="1.800" height="1.800" fill="#fff"/><rect x="25.7" y="4.0" width="1.800" height="1.800" fill="#fff"/><rect x="25.7" y="7.3" width="1.800" height="1.800" fill="#fff"/><rect x="25.7" y="10.6" width="1.800" height="1.800" fill="#fff"/><rect x="8" y="13.600" width="15" height="1.800" fill="#fff"/></svg>
<svg class="a" style="left:1364px;top:878px;" width="9" height="6" viewBox="0 0 9 6"><path d="M0 5.500 4.500 0 9 5.500z" fill="#fff"/></svg>
<svg class="a" style="left:1384px;top:872px;" width="18" height="18" viewBox="0 0 18 18"><path d="M3 1h5v4H3z" fill="#ddd" stroke="#555" stroke-width=".6"/><path d="M1.500 5h8v6l-2 2v4h-4v-4l-2-2z" fill="#555"/><circle cx="12" cy="12" r="5" fill="#1fa53a" stroke="#0c6a20" stroke-width=".5"/><path d="M9.500 12l2 2 3-4" fill="none" stroke="#fff" stroke-width="1.500"/></svg>
<svg class="a" style="left:1411px;top:873px;" width="14" height="16" viewBox="0 0 14 16"><path d="M0 5h3l5-5v16l-5-5H0z" fill="#fff"/><path d="M10.500 4a6 6 0 0 1 0 8" fill="none" stroke="#fff" stroke-width="1.200"/></svg>
<svg class="a" style="left:1434px;top:872px;" width="16" height="17" viewBox="0 0 16 17"><path d="M1 0v4M4.500 0v4" stroke="#fff" stroke-width="1.400"/><path d="M0 4h5.500v5l-1.500 2v5h-2.500v-5L0 9z" fill="#fff"/><rect x="8" y="2" width="7.500" height="14.500" rx="1" fill="none" stroke="#fff" stroke-width="1.300"/><rect x="10" y=".3" width="3.500" height="1.700" fill="#fff"/></svg>
<svg class="a" style="left:1457px;top:874px;" width="16" height="13" viewBox="0 0 16 13"><rect x="0.0" y="9.6" width="2.200" height="2.4" fill="#fff"/><rect x="3.2" y="7.2" width="2.200" height="4.8" fill="#fff"/><rect x="6.4" y="4.8" width="2.200" height="7.2" fill="#fff"/><rect x="9.6" y="2.4" width="2.200" height="9.6" fill="#fff"/><rect x="12.8" y="0.0" width="2.200" height="12.0" fill="#fff"/></svg>
<div class="t" style="top:875.82px;font-size:11.5px;left:1488px;color:#fff;letter-spacing:-0.344px;">РУС</div>
<div class="t" style="top:867.24px;font-size:11px;left:1541px;color:#fff;letter-spacing:-0.106px;">20:59</div>
<div class="t" style="top:884.74px;font-size:11px;left:1527.5px;color:#fff;letter-spacing:-0.156px;">15.06.2020</div>
<div class="a" style="left:0px;top:0px;width:800px;height:859px;background:#bbd2e8;box-shadow:inset 0 0 0 1px #7d8c9c;"></div>
<div class="a" style="left:1px;top:1px;width:798px;height:1px;background:#c9dcef;"></div>
<div class="a" style="left:748px;top:1px;width:45px;height:20px;background:#c75050;"></div>
<svg class="a" style="left:764px;top:7px;" width="11" height="9" viewBox="0 0 11 9"><path d="M1 .5 10 8.500M10 .5 1 8.500" stroke="#fff" stroke-width="2.200"/></svg>
<svg class="a" style="left:729px;top:7px;" width="12" height="9" viewBox="0 0 12 9"><rect x="1" y="1.500" width="10" height="6.500" fill="none" stroke="#111" stroke-width="1.400"/><rect x="1" y=".5" width="10" height="2" fill="#111"/></svg>
<div class="a" style="left:704px;top:12.5px;width:9px;height:2px;background:#111;"></div>
<div class="a" style="left:55.5px;top:16px;width:1.2px;height:20px;background:#6f7f90;"></div>
<div class="a" style="left:95.5px;top:16px;width:1.2px;height:20px;background:#6f7f90;"></div>
<div class="a" style="left:135.5px;top:16px;width:1.2px;height:20px;background:#6f7f90;"></div>
<div class="a" style="left:175.5px;top:16px;width:1.2px;height:20px;background:#6f7f90;"></div>
<div class="a" style="left:215.5px;top:16px;width:1.2px;height:20px;background:#6f7f90;"></div>
<div class="a" style="left:255.0px;top:16px;width:1.2px;height:20px;background:#6f7f90;"></div>
<div class="a" style="left:294.0px;top:16px;width:1.2px;height:20px;background:#6f7f90;"></div>
<div class="a" style="left:333.2px;top:16px;width:1.2px;height:20px;background:#6f7f90;"></div>
<div class="a" style="left:372.0px;top:16px;width:1.2px;height:20px;background:#6f7f90;"></div>
<div class="a" style="left:411.0px;top:16px;width:1.2px;height:20px;background:#6f7f90;"></div>
<div class="a" style="left:450.0px;top:16px;width:1.2px;height:20px;background:#6f7f90;"></div>
<div class="a" style="left:567.0px;top:16px;width:1.2px;height:20px;background:#6f7f90;"></div>
<div class="a" style="left:606.0px;top:16px;width:1.2px;height:20px;background:#6f7f90;"></div>
<svg class="a" style="left:24px;top:18px;" width="16" height="16" viewBox="0 0 16 16"><rect width="16" height="16" rx="3.500" fill="#5181b8"/><path d="M2.800 5.300a2 2 0 0 1 2-2h6.400a2 2 0 0 1 2 2v3.700a2 2 0 0 1-2 2H8l-2 1.900V11H4.800a2 2 0 0 1-2-2z" fill="#fff"/></svg>
<svg class="a" style="left:64px;top:18px;" width="16" height="16" viewBox="0 0 16 16"><rect width="16" height="16" fill="#f0ede9" fill-opacity=".92"/><g transform="translate(1.60 2.10) scale(0.8)" fill="#3fb39d"><path d="M3.200 2.800c1.800-1 3.800.4 4.300 2.500l1.700-3.500 1.300.8-.9 3 2.900-1.700-.9 2.600 1.800 2.400-1.300 1 1.900 3.400-2.300 1.200-1.500-3.200-1.700 1.200.5 3.300H5.800l-.1-2.500-2.400 2.300-2.500.2 1.500-2.900 2-1.500.6-2.700C3.300 7.500 2 5 3.200 2.800z"/><path d="M11.300 1.500 13.300.7l.4 1.500-1.800.8z"/></g></svg>
<svg class="a" style="left:104px;top:18px;" width="16" height="16" viewBox="0 0 16 16"><rect width="16" height="16" fill="#f0ede9" fill-opacity=".92"/><g transform="translate(0.00 0.00) scale(1)" fill="#3fb39d"><path d="M3.200 2.800c1.800-1 3.800.4 4.300 2.500l1.700-3.500 1.300.8-.9 3 2.900-1.700-.9 2.600 1.800 2.400-1.300 1 1.900 3.400-2.300 1.200-1.500-3.200-1.700 1.200.5 3.300H5.800l-.1-2.500-2.400 2.300-2.500.2 1.500-2.900 2-1.500.6-2.700C3.300 7.500 2 5 3.200 2.800z"/><path d="M11.300 1.500 13.300.7l.4 1.500-1.800.8z"/></g></svg>
<svg class="a" style="left:144px;top:18px;" width="16" height="16" viewBox="0 0 16 16"><rect width="16" height="16" rx="3" fill="#0a5ff0"/><rect x="3" y="4.500" width="10" height="7" rx=".8" fill="#fff"/><path d="M3.500 5l3.500 3.200M12.500 5 9 8.200M3.500 11l3-2.800M12.500 11l-3-2.800M6 8l2 1.500L10 8" fill="none" stroke="#0a5ff0" stroke-width="1.100"/></svg>
<svg class="a" style="left:184px;top:18px;" width="16" height="16" viewBox="0 0 16 16"><rect y="1" width="16" height="15" rx="1" fill="#3b6de0"/><rect y="1" width="16" height="3.500" fill="#2c4fb8"/></svg>
<div class="t" style="top:23.59px;font-size:10px;left:186.3px;font-weight:700;color:#fff;letter-spacing:-.3px;">15</div>
<svg class="a" style="left:223px;top:18px;" width="16" height="16" viewBox="0 0 16 16"><rect width="16" height="16" fill="#f0ede9" fill-opacity=".92"/><g transform="translate(0.00 0.00) scale(1)" fill="#3fb39d"><path d="M3.200 2.800c1.800-1 3.800.4 4.300 2.500l1.700-3.500 1.300.8-.9 3 2.900-1.700-.9 2.600 1.800 2.400-1.300 1 1.900 3.400-2.300 1.200-1.500-3.200-1.700 1.200.5 3.300H5.800l-.1-2.500-2.400 2.300-2.500.2 1.500-2.900 2-1.500.6-2.700C3.300 7.500 2 5 3.200 2.800z"/><path d="M11.300 1.500 13.300.7l.4 1.500-1.800.8z"/></g></svg>
<svg class="a" style="left:262.5px;top:18px;" width="16" height="16" viewBox="0 0 16 16"><rect width="16" height="16" fill="#f0ede9" fill-opacity=".92"/><g transform="translate(0.00 0.00) scale(1)" fill="#3fb39d"><path d="M3.200 2.800c1.800-1 3.800.4 4.300 2.500l1.700-3.500 1.300.8-.9 3 2.900-1.700-.9 2.600 1.800 2.400-1.300 1 1.900 3.400-2.300 1.200-1.500-3.200-1.700 1.200.5 3.300H5.800l-.1-2.500-2.400 2.300-2.500.2 1.500-2.900 2-1.500.6-2.700C3.300 7.500 2 5 3.200 2.800z"/><path d="M11.300 1.500 13.300.7l.4 1.500-1.800.8z"/></g></svg>
<svg class="a" style="left:302px;top:18px;" width="16" height="16" viewBox="0 0 16 16"><rect width="16" height="16" rx="1.500" fill="#949494"/><path d="M0 1.500A1.500 1.500 0 0 1 1.500 0h13A1.500 1.500 0 0 1 16 1.500V8H0z" fill="#f7901e"/><path d="M0 2.500c3 .3 4.300 2.500 5 5.500.5 2 .8 4.500 2 6 .6-3 1.200-7.500 3.500-9.500 1.500-1.200 3.500-1 5.500-1V6c-2 0-3.300-.2-4.300.8-.4.400-.7 1-.9 1.700H15v2h-4.800c-.5 2-.7 4-1.700 5.500H6C4.500 14 4 11 3.400 8.500 2.800 6.500 2 5 0 5z" fill="#fff"/></svg>
<svg class="a" style="left:341px;top:18px;" width="16" height="16" viewBox="0 0 16 16"><rect width="16" height="16" rx="1.500" fill="#949494"/><path d="M0 1.500A1.500 1.500 0 0 1 1.500 0h13A1.500 1.500 0 0 1 16 1.500V8H0z" fill="#f7901e"/><path d="M0 2.500c3 .3 4.300 2.500 5 5.500.5 2 .8 4.500 2 6 .6-3 1.200-7.500 3.500-9.500 1.500-1.200 3.500-1 5.500-1V6c-2 0-3.300-.2-4.300.8-.4.400-.7 1-.9 1.700H15v2h-4.800c-.5 2-.7 4-1.700 5.500H6C4.500 14 4 11 3.400 8.500 2.800 6.500 2 5 0 5z" fill="#fff"/></svg>
<svg class="a" style="left:380px;top:18px;" width="16" height="16" viewBox="0 0 16 16"><circle cx="8" cy="8" r="8" fill="#fff"/><g transform="translate(2.400 2.400) scale(.7)"><path d="M15.500 8.200c0-.5 0-1-.1-1.500H8v3h4.200a3.600 3.600 0 0 1-1.600 2.400v2h2.500c1.500-1.400 2.400-3.400 2.400-5.900z" fill="#4285f4"/><path d="M8 16c2.100 0 3.900-.7 5.200-1.900l-2.500-2c-.7.500-1.600.8-2.700.8-2 0-3.800-1.400-4.400-3.300H1v2C2.300 14.200 4.900 16 8 16z" fill="#34a853"/><path d="M3.600 9.600a4.800 4.800 0 0 1 0-3.100v-2H1a8 8 0 0 0 0 7.200z" fill="#fbbc05"/><path d="M8 3.200c1.200 0 2.200.4 3 1.200l2.300-2.300C11.900.8 10.100 0 8 0 4.900 0 2.300 1.800 1 4.400l2.600 2C4.200 4.600 6 3.200 8 3.200z" fill="#ea4335"/></g></svg>
<svg class="a" style="left:419.5px;top:18px;" width="16" height="16" viewBox="0 0 16 16"><circle cx="8" cy="8" r="8" fill="#fff"/><g transform="translate(2.400 2.400) scale(.7)"><path d="M15.500 8.200c0-.5 0-1-.1-1.500H8v3h4.200a3.600 3.600 0 0 1-1.600 2.400v2h2.500c1.500-1.400 2.400-3.400 2.400-5.900z" fill="#4285f4"/><path d="M8 16c2.100 0 3.900-.7 5.200-1.900l-2.500-2c-.7.500-1.600.8-2.700.8-2 0-3.800-1.400-4.400-3.300H1v2C2.300 14.200 4.900 16 8 16z" fill="#34a853"/><path d="M3.600 9.600a4.800 4.800 0 0 1 0-3.100v-2H1a8 8 0 0 0 0 7.200z" fill="#fbbc05"/><path d="M8 3.200c1.200 0 2.200.4 3 1.200l2.300-2.300C11.900.8 10.100 0 8 0 4.900 0 2.300 1.800 1 4.400l2.600 2C4.200 4.600 6 3.200 8 3.200z" fill="#ea4335"/></g></svg>
<svg class="a" style="left:457.5px;top:18px;" width="16" height="16" viewBox="0 0 16 16"><circle cx="8" cy="8" r="7.400" fill="#5f6368"/><path d="M3.500 5.500c1-.2 2.600.2 2.800 1.200.2.900-.9 1.300-.5 2.100.4.700 1.500.5 1.800 1.400.3.800-.3 1.500-.2 2.300.1.700.4 1.300.2 1.900-2.200-.3-4.600-2-5.300-4.400-.3-1.600.2-3.300 1.200-4.500zM8.800 2.200c2 .2 3.800 1.500 4.700 3.300-.8.300-1.500 0-2.100.4-.6.500-.3 1.400-1 1.700-.9.300-1.700-.4-1.800-1.300-.1-.8.700-1.200.6-2-.1-.7-.7-1.300-.4-2.100z" fill="#c3d5e8"/></svg>
<svg class="a" style="left:481px;top:9px" width="56" height="34" viewBox="0 0 56 34"><path d="M0 34c4.500 0 8-3.500 8-8V8a8 8 0 0 1 8-8h24a8 8 0 0 1 8 8v18c0 4.500 3.500 8 8 8z" fill="#fff"/></svg>
<div class="t" style="top:21.89px;font-size:12px;left:497px;color:#5f6368;width:3.500px;overflow:hidden;">M</div>
<svg class="a" style="left:509px;top:21.5px;" width="9" height="9" viewBox="0 0 9 9"><path d="M.8 .8 8.200 8.200M8.200 .8 .8 8.200" stroke="#3c4043" stroke-width="1.400"/></svg>
<svg class="a" style="left:535.5px;top:18px;" width="16" height="16" viewBox="0 0 16 16"><circle cx="8" cy="8" r="7.400" fill="#5f6368"/><path d="M3.500 5.500c1-.2 2.600.2 2.800 1.200.2.900-.9 1.300-.5 2.100.4.700 1.500.5 1.800 1.400.3.800-.3 1.500-.2 2.300.1.700.4 1.300.2 1.900-2.200-.3-4.600-2-5.300-4.400-.3-1.600.2-3.300 1.200-4.500zM8.800 2.200c2 .2 3.800 1.500 4.700 3.300-.8.300-1.500 0-2.100.4-.6.500-.3 1.400-1 1.700-.9.300-1.700-.4-1.800-1.300-.1-.8.700-1.200.6-2-.1-.7-.7-1.300-.4-2.100z" fill="#c3d5e8"/></svg>
<svg class="a" style="left:574.5px;top:18px;" width="16" height="16" viewBox="0 0 16 16"><circle cx="8" cy="8" r="7.400" fill="#5f6368"/><path d="M3.500 5.500c1-.2 2.600.2 2.800 1.200.2.900-.9 1.300-.5 2.100.4.700 1.500.5 1.800 1.400.3.800-.3 1.500-.2 2.300.1.700.4 1.300.2 1.900-2.200-.3-4.600-2-5.300-4.400-.3-1.600.2-3.300 1.200-4.500zM8.800 2.200c2 .2 3.800 1.500 4.700 3.300-.8.300-1.500 0-2.100.4-.6.500-.3 1.400-1 1.700-.9.300-1.700-.4-1.800-1.300-.1-.8.700-1.200.6-2-.1-.7-.7-1.300-.4-2.100z" fill="#c3d5e8"/></svg>
<svg class="a" style="left:622px;top:20px;" width="13" height="13" viewBox="0 0 13 13"><path d="M6.500 0v13M0 6.500h13" stroke="#222" stroke-width="1.900"/></svg>
<div class="a" style="left:8px;top:43px;width:784px;height:69px;background:#fff;"></div>
<div class="a" style="left:8px;top:111px;width:784px;height:1px;background:#dcdee1;"></div>
<svg class="a" style="left:22px;top:53px;" width="16" height="16" viewBox="0 0 16 16"><path d="M15 8H2.500M8 1.800 1.800 8 8 14.200" fill="none" stroke="#babcbe" stroke-width="1.700"/></svg>
<svg class="a" style="left:54px;top:53px;" width="16" height="16" viewBox="0 0 16 16"><path d="M1 8h12.500M8 1.800 14.200 8 8 14.200" fill="none" stroke="#babcbe" stroke-width="1.700"/></svg>
<svg class="a" style="left:86px;top:53px;" width="16" height="16" viewBox="0 0 16 16"><path d="M13.300 5.200A6.200 6.200 0 1 0 14 9.500" fill="none" stroke="#4a4d51" stroke-width="2"/><path d="M14.800 1v6h-6z" fill="#4a4d51"/></svg>
<svg class="a" style="left:117px;top:52px;" width="18" height="17" viewBox="0 0 18 17"><path d="M1 9.200 9 1.500l8 7.700h-2.600V16H3.600V9.200z" fill="none" stroke="#3c4043" stroke-width="2" stroke-linejoin="miter"/></svg>
<div class="a" style="left:147.5px;top:47px;width:523px;height:27.5px;background:#f1f3f4;border-radius:14px;"></div>
<svg class="a" style="left:159px;top:54px;" width="14" height="14" viewBox="0 0 14 14"><circle cx="7" cy="7" r="6" fill="none" stroke="#5f6368" stroke-width="1.400"/><rect x="6.300" y="6.200" width="1.400" height="4" fill="#5f6368"/><rect x="6.300" y="3.500" width="1.400" height="1.500" fill="#5f6368"/></svg>
<div class="t" style="top:54.7px;font-size:14px;left:182.8px;color:#5f6368;letter-spacing:-0.2px;">Не защищено</div>
<div class="a" style="left:279.2px;top:53px;width:1px;height:15px;background:#9aa0a6;"></div>
<div class="t" style="top:54.7px;font-size:14px;left:289.4px;color:#202124;letter-spacing:-0.167px;">opac.unecon.ru</div>
<div class="t" style="top:54.7px;font-size:14px;left:384px;color:#5f6368;letter-spacing:0.114px;">/elibrary/elib/312917876.pdf</div>
<svg class="a" style="left:614px;top:54px;" width="15" height="15" viewBox="0 0 15 15"><circle cx="5.800" cy="5.800" r="4.600" fill="none" stroke="#5f6368" stroke-width="1.500"/><path d="M9.300 9.300 14 14" stroke="#5f6368" stroke-width="1.700"/><path d="M3.500 5.800h4.600" stroke="#5f6368" stroke-width="1.300"/></svg>
<svg class="a" style="left:645px;top:53px;" width="16" height="16" viewBox="0 0 16 16"><path d="M8 1.500l2 4.600 5 .5-3.800 3.300 1.100 4.900L8 12.200l-4.300 2.600 1.100-4.900L1 6.600l5-.5z" fill="none" stroke="#5f6368" stroke-width="1.400" stroke-linejoin="round"/></svg>
<svg class="a" style="left:685.5px;top:54px;" width="15.5" height="15" viewBox="0 0 15.5 15"><path d="M0 0h15.500v10l-5 5H0z" fill="#5f6368"/><path d="M10.500 15v-5h5z" fill="#9aa0a6"/><path d="M7.700 2.300a3.300 3.300 0 0 0-1.800 6.100v1.700h3.600V8.400a3.300 3.300 0 0 0-1.800-6.100zM6.300 11h2.800v1.200H6.300z" fill="#fff"/><path d="M7.700 3.600a2 2 0 0 0-.8 3.900v1.400h1.600V7.500a2 2 0 0 0-.8-3.900z" fill="#5f6368"/></svg>
<div class="a" style="left:715px;top:53px;width:1px;height:16px;background:#dadce0;"></div>
<div class="a" style="left:727px;top:50px;width:22px;height:22px;background:radial-gradient(circle at 40% 60%,#2a1a14 0,#0a0c12 60%);border-radius:11px;"></div>
<svg class="a" style="left:768px;top:54px;" width="5" height="15" viewBox="0 0 5 15"><circle cx="2.500" cy="2.500" r="1.650" fill="#5f6368"/><circle cx="2.500" cy="7.700" r="1.650" fill="#5f6368"/><circle cx="2.500" cy="12.900" r="1.650" fill="#5f6368"/></svg>
<svg class="a" style="left:23px;top:86px;" width="14" height="14" viewBox="0 0 14 14"><rect x="0" y="0" width="3.200" height="3.200" fill="#ea4335"/><rect x="5" y="0" width="3.200" height="3.200" fill="#ea4335"/><rect x="10" y="0" width="3.200" height="3.200" fill="#ea4335"/><rect x="0" y="5" width="3.200" height="3.200" fill="#34a853"/><rect x="5" y="5" width="3.200" height="3.200" fill="#4285f4"/><rect x="10" y="5" width="3.200" height="3.200" fill="#fbbc05"/><rect x="0" y="10" width="3.200" height="3.200" fill="#34a853"/><rect x="5" y="10" width="3.200" height="3.200" fill="#fbbc05"/><rect x="10" y="10" width="3.200" height="3.200" fill="#fbbc05"/></svg>
<div class="t" style="top:87.39px;font-size:12px;left:46.5px;color:#3c4043;letter-spacing:-0.022px;">Приложения</div>
<svg class="a" style="left:134px;top:85px;" width="16" height="16" viewBox="0 0 16 16"><path d="M1 3.500 4.500 .8 15 12.500 11.500 15.200z" fill="#1b2a90"/><path d="M15 3.500 11.500 .8 1 12.500 4.500 15.200z" fill="#8a2be2"/><path d="M13 2.300 2.800 13.800" stroke="#e9c4ff" stroke-width="1"/></svg>
<div class="t" style="top:87.39px;font-size:12px;left:158px;color:#3c4043;letter-spacing:-0.097px;">Теория вероятност...</div>
<svg class="a" style="left:289px;top:85px;" width="15" height="16" viewBox="0 0 15 16"><defs><clipPath id="ec"><circle cx="7.500" cy="8" r="7.300"/></clipPath></defs><g clip-path="url(#ec)"><rect width="15" height="16" fill="#fff"/><rect width="15" height="4.200" fill="#d3202f"/><rect y="11" width="15" height="1.700" fill="#1b2f8f"/><rect y="12.700" width="15" height="1.300" fill="#fff"/><rect y="13.600" width="15" height="2.400" fill="#d3202f"/><path d="M3.300 8.300h8.400c0-2.500-1.800-4-4.200-4S3.300 5.900 3.300 8.300s1.900 3.700 4.300 3.700c1.500 0 2.800-.5 3.600-1.500" fill="none" stroke="#1b2f8f" stroke-width="2.100"/></g></svg>
<div class="t" style="top:87.39px;font-size:12px;left:312px;color:#3c4043;letter-spacing:-0.095px;">Английская транск...</div>
<svg class="a" style="left:442px;top:85px;" width="16" height="16" viewBox="0 0 16 16"><path d="M1 0h14v9c0 4-4 6-7 7-3-1-7-3-7-7z" fill="#c8202e" stroke="#8f1520" stroke-width=".6"/><path d="M7.200 .3h1.600v15.300H7.200zM1.300 5.500h13.400v1.600H1.300z" fill="#fff"/><path d="M2.500 1.500h3.500v2.800H2.500zM10 1.500h3.500v2.800H10zM2.500 8.500h3.500v2.800H2.500zM10 8.500h3.500v2.800H10z" fill="#f0c030" fill-opacity=".85"/><rect x="6.700" y="5" width="2.600" height="2.600" fill="#a01020"/></svg>
<div class="t" style="top:87.39px;font-size:12px;left:466px;color:#3c4043;letter-spacing:-0.091px;">avoid Определени...</div>
<svg class="a" style="left:596px;top:85px;" width="16" height="16" viewBox="0 0 16 16"><rect width="16" height="16" rx="2.500" fill="#005ff9"/><circle cx="8" cy="8" r="2.400" fill="none" stroke="#ff9e00" stroke-width="1.500"/><path d="M10.400 5.500v3.300c0 1.500 2.300 1.500 2.300-.8a4.700 4.700 0 1 0-1.900 3.800" fill="none" stroke="#ff9e00" stroke-width="1.400"/></svg>
<div class="t" style="top:87.39px;font-size:12px;left:620px;color:#3c4043;letter-spacing:-0.241px;">Mail.Ru</div>
<svg class="a" style="left:765px;top:89px;" width="9" height="8" viewBox="0 0 9 8"><path d="M.8 .8 4 4 .8 7.200M4.800 .8 8 4 4.800 7.200" fill="none" stroke="#5f6368" stroke-width="1.800"/></svg>
<div class="a" style="left:8px;top:112px;width:767px;height:691px;background:#525659;"></div>
<div class="a" style="left:13px;top:160px;width:757px;height:643px;background:#fff;"></div>
<div class="a" style="left:775px;top:112px;width:17px;height:691px;background:#f1f1f1;"></div>
<svg class="a" style="left:779px;top:118px;" width="9" height="6" viewBox="0 0 9 6"><path d="M0 5.500 4.500 .5 9 5.500z" fill="#505050"/></svg>
<svg class="a" style="left:779px;top:790px;" width="9" height="6" viewBox="0 0 9 6"><path d="M0 .5 4.500 5.500 9 .5z" fill="#505050"/></svg>
<div class="a" style="left:777px;top:590px;width:13px;height:17px;background:#c1c1c1;"></div>
<div class="t" style="left:193px;top:154.15px;font-size:12.78px;font-family:'Liberation Serif',serif;width:397px;text-align:justify;text-align-last:justify;white-space:normal;height:12.78px;overflow:visible;">показателя обусловлено разнообразными и многочисленными фактора-</div>
<div class="t" style="left:193px;top:168.11px;font-size:12.78px;font-family:'Liberation Serif',serif;width:397px;text-align:justify;text-align-last:justify;white-space:normal;height:12.78px;overflow:visible;">ми его формирования. Оценка роли этих факторов позволяет анализи-</div>
<div class="t" style="left:193px;top:182.77px;font-size:12.78px;font-family:'Liberation Serif',serif;width:397px;text-align:justify;text-align-last:justify;white-space:normal;height:12.78px;overflow:visible;">ровать качество прибыли, реальный прирост капитала, прогнозировать</div>
<div class="t" style="left:193px;top:197.43px;font-size:12.78px;font-family:'Liberation Serif',serif;width:397px;text-align:justify;text-align-last:justify;white-space:normal;height:12.78px;overflow:visible;">изменение финансовых результатов, оценивать качество управленче-</div>
<div class="t" style="left:193px;top:212.09px;font-size:12.78px;font-family:'Liberation Serif',serif;width:397px;text-align:justify;text-align-last:justify;white-space:normal;height:12.78px;overflow:visible;">ских решений руководства организации в отчетном году. Значение по-</div>
<div class="t" style="left:193px;top:226.75px;font-size:12.78px;font-family:'Liberation Serif',serif;width:397px;text-align:justify;text-align-last:justify;white-space:normal;height:12.78px;overflow:visible;">казателя чистой прибыли обусловлено также и тем, что он показывает</div>
<div class="t" style="left:193px;top:241.41px;font-size:12.78px;font-family:'Liberation Serif',serif;width:397px;text-align:justify;text-align-last:justify;white-space:normal;height:12.78px;overflow:visible;">возможности и границы направления капитала организации на цели</div>
<div class="t" style="left:193px;top:256.07px;font-size:12.78px;font-family:'Liberation Serif',serif;width:397px;text-align:justify;text-align-last:justify;white-space:normal;height:12.78px;overflow:visible;">расширенного воспроизводства и выплату доходов собственникам (уча-</div>
<div class="t" style="left:193px;top:270.73px;font-size:12.78px;font-family:'Liberation Serif',serif;">стникам и учредителям организации) по результатам отчетного года.</div>
<div class="t" style="left:227.2px;top:285.39px;font-size:12.78px;font-family:'Liberation Serif',serif;width:362.8px;text-align:justify;text-align-last:justify;white-space:normal;height:12.78px;overflow:visible;">Нераспределенная прибыль отчетного периода характеризует</div>
<div class="t" style="left:193px;top:300.05px;font-size:12.78px;font-family:'Liberation Serif',serif;width:397px;text-align:justify;text-align-last:justify;white-space:normal;height:12.78px;overflow:visible;">прирост капитала, достигнутый в отчетном году в результате ведения</div>
<div class="t" style="left:193px;top:314.71px;font-size:12.78px;font-family:'Liberation Serif',serif;">хозяйственной деятельности.</div>
<svg class="a" style="left:0;top:0" width="800" height="800" viewBox="0 0 800 800"><g fill="none" stroke="#000" stroke-width="1.100"><rect x="226.500" y="360.500" width="64" height="332.500"/><rect x="410.500" y="354.5" width="153" height="24.0"/><rect x="410.500" y="395" width="153" height="37"/><rect x="410.500" y="452.5" width="153" height="41.0"/><rect x="410.500" y="508" width="153" height="36"/><rect x="410.500" y="563.5" width="153" height="38.0"/><rect x="410.500" y="624.5" width="153" height="35.0"/><rect x="410.500" y="681.5" width="153" height="25.0"/><path d="M410.5 368.3L291.5 468.6"/><path d="M410.5 413L291.5 480.4"/><path d="M410.5 473L291.5 492.8"/><path d="M410.5 524.5L291.5 505.4"/><path d="M410.5 582L291.5 518.5"/><path d="M410.5 644.5L291.5 541.5"/><path d="M410.5 694.9L291.5 554.5"/></g><path d="M291.5 468.6L300.4 465.2L296.3 460.4z" fill="#000"/><path d="M291.5 480.4L300.9 478.7L297.8 473.2z" fill="#000"/><path d="M291.5 492.8L300.9 494.5L299.9 488.2z" fill="#000"/><path d="M291.5 505.4L299.9 510.0L300.9 503.7z" fill="#000"/><path d="M291.5 518.5L297.9 525.6L300.9 519.9z" fill="#000"/><path d="M291.5 541.5L296.2 549.8L300.4 545.0z" fill="#000"/><path d="M291.5 554.5L294.9 563.4L299.8 559.3z" fill="#000"/></svg>
<div class="t" style="left:410.5px;width:153px;text-align:center;top:360.92px;font-size:11.44px;font-family:'Liberation Serif',serif;">Физический объем продаж</div>
<div class="t" style="left:410.5px;width:153px;text-align:center;top:401.42px;font-size:11.44px;font-family:'Liberation Serif',serif;">Ассортиментная и ценовая</div>
<div class="t" style="left:410.5px;width:153px;text-align:center;top:414.22px;font-size:11.44px;font-family:'Liberation Serif',serif;">политика</div>
<div class="t" style="left:410.5px;width:153px;text-align:center;top:458.22px;font-size:11.44px;font-family:'Liberation Serif',serif;">Оптимизация</div>
<div class="t" style="left:410.5px;width:153px;text-align:center;top:472.22px;font-size:11.44px;font-family:'Liberation Serif',serif;">производственных расходов</div>
<div class="t" style="left:410.5px;width:153px;text-align:center;top:514.52px;font-size:11.44px;font-family:'Liberation Serif',serif;">Контроль управленческих</div>
<div class="t" style="left:410.5px;width:153px;text-align:center;top:528.22px;font-size:11.44px;font-family:'Liberation Serif',serif;">и коммерческих расходов</div>
<div class="t" style="left:410.5px;width:153px;text-align:center;top:570.42px;font-size:11.44px;font-family:'Liberation Serif',serif;">Соотношение прочих</div>
<div class="t" style="left:410.5px;width:153px;text-align:center;top:584.22px;font-size:11.44px;font-family:'Liberation Serif',serif;">доходов и расходов</div>
<div class="t" style="left:410.5px;width:153px;text-align:center;top:630.22px;font-size:11.44px;font-family:'Liberation Serif',serif;">Оптимизация</div>
<div class="t" style="left:410.5px;width:153px;text-align:center;top:644.22px;font-size:11.44px;font-family:'Liberation Serif',serif;">налогообложения</div>
<div class="t" style="left:410.5px;width:153px;text-align:center;top:688.22px;font-size:11.44px;font-family:'Liberation Serif',serif;">Учетная политика</div>
<div class="t" style="left:248px;width:20px;text-align:center;top:418.82px;font-size:11.2px;font-family:'Liberation Serif',serif;">Ч</div>
<div class="t" style="left:248px;width:20px;text-align:center;top:433.22px;font-size:11.2px;font-family:'Liberation Serif',serif;">И</div>
<div class="t" style="left:248px;width:20px;text-align:center;top:446.12px;font-size:11.2px;font-family:'Liberation Serif',serif;">С</div>
<div class="t" style="left:248px;width:20px;text-align:center;top:458.72px;font-size:11.2px;font-family:'Liberation Serif',serif;">Т</div>
<div class="t" style="left:248px;width:20px;text-align:center;top:471.82px;font-size:11.2px;font-family:'Liberation Serif',serif;">А</div>
<div class="t" style="left:248px;width:20px;text-align:center;top:484.92px;font-size:11.2px;font-family:'Liberation Serif',serif;">Я</div>
<div class="t" style="left:248px;width:20px;text-align:center;top:512.42px;font-size:11.2px;font-family:'Liberation Serif',serif;">П</div>
<div class="t" style="left:248px;width:20px;text-align:center;top:525.12px;font-size:11.2px;font-family:'Liberation Serif',serif;">Р</div>
<div class="t" style="left:248px;width:20px;text-align:center;top:538.22px;font-size:11.2px;font-family:'Liberation Serif',serif;">И</div>
<div class="t" style="left:248px;width:20px;text-align:center;top:551.12px;font-size:11.2px;font-family:'Liberation Serif',serif;">Б</div>
<div class="t" style="left:248px;width:20px;text-align:center;top:564.22px;font-size:11.2px;font-family:'Liberation Serif',serif;">Ы</div>
<div class="t" style="left:248px;width:20px;text-align:center;top:577.92px;font-size:11.2px;font-family:'Liberation Serif',serif;">Л</div>
<div class="t" style="left:248px;width:20px;text-align:center;top:591.22px;font-size:11.2px;font-family:'Liberation Serif',serif;">Ь</div>
<div class="t" style="top:720.02px;font-size:14.3px;left:266.6px;font-family:'Liberation Serif',serif;transform:scaleX(.8937);transform-origin:left center;">Рис. 3.2. Факторы изменения чистой прибыли</div>
<div class="a" style="left:708px;top:612.7px;width:36px;height:36px;background:#f2f3f4;border-radius:18px;box-shadow:0 1.500px 3px rgba(0,0,0,.35),0 0 1px rgba(0,0,0,.25);"></div>
<svg class="a" style="left:720px;top:624.7px;" width="12" height="12" viewBox="0 0 12 12"><path d="M4.300 0v4.300H0M7.700 0v4.300H12M4.300 12V7.700H0M7.700 12V7.700H12" fill="none" stroke="#5f6368" stroke-width="1.300"/></svg>
<div class="a" style="left:708px;top:672.7px;width:36px;height:36px;background:#f2f3f4;border-radius:18px;box-shadow:0 1.500px 3px rgba(0,0,0,.35),0 0 1px rgba(0,0,0,.25);"></div>
<svg class="a" style="left:720px;top:684.7px;" width="12" height="12" viewBox="0 0 12 12"><path d="M6 0v12M0 6h12" stroke="#5f6368" stroke-width="1.400"/></svg>
<div class="a" style="left:708px;top:718.7px;width:36px;height:36px;background:#f2f3f4;border-radius:18px;box-shadow:0 1.500px 3px rgba(0,0,0,.35),0 0 1px rgba(0,0,0,.25);"></div>
<svg class="a" style="left:720px;top:730.7px;" width="12" height="12" viewBox="0 0 12 12"><path d="M0 6h12" stroke="#5f6368" stroke-width="1.400"/></svg>
<div class="a" style="left:8px;top:112px;width:767px;height:48px;background:#323639;box-shadow:0 2px 3px rgba(0,0,0,.45);"></div>
<div class="t" style="top:128.9px;font-size:14px;left:32px;font-weight:700;color:#ececec;letter-spacing:-0.334px;">Microsoft Word - ......... Metodihka_logistika_27.09</div>
<div class="t" style="top:129.35px;font-size:13px;left:370.7px;font-weight:700;color:#ececec;letter-spacing:0.248px;">43 / 59</div>
<svg class="a" style="left:567px;top:127px;" width="16" height="17" viewBox="0 0 16 17"><path d="M8 3.200A5.800 5.800 0 0 0 8 14.800" fill="none" stroke="#f1f1f1" stroke-width="1.700"/><path d="M8 14.800A5.800 5.800 0 0 0 13.600 7.500" fill="none" stroke="#f1f1f1" stroke-width="1.700" stroke-dasharray="2.600 1.700"/><path d="M7.500 0 11.800 3.200 7.500 6.400z" fill="#f1f1f1"/></svg>
<svg class="a" style="left:616px;top:128.4px;" width="13" height="15" viewBox="0 0 13 15"><path d="M3.800 0h5.400v5.200H13L6.500 11.300 0 5.200h3.800z" fill="#f1f1f1"/><rect y="12.800" width="13" height="1.800" fill="#f1f1f1"/></svg>
<svg class="a" style="left:662px;top:128px;" width="18" height="16" viewBox="0 0 18 16"><rect x="4" y="0" width="10" height="3.500" fill="#f1f1f1"/><path d="M2.500 4.500h13A2.500 2.500 0 0 1 18 7v6h-3.500v3h-11v-3H0V7a2.500 2.500 0 0 1 2.500-2.500z" fill="#f1f1f1"/><rect x="5.500" y="10.500" width="7" height="4" fill="#323639"/><circle cx="15" cy="7.500" r="1" fill="#323639"/></svg>
<svg class="a" style="left:712px;top:128px;" width="13" height="16" viewBox="0 0 13 16"><path d="M1 1h11v13.500L6.500 12 1 14.500z" fill="none" stroke="#f1f1f1" stroke-width="1.800"/></svg>
<svg class="a" style="left:734.5px;top:134px;" width="8" height="5" viewBox="0 0 8 5"><path d="M0 0h8L4 4.500z" fill="#f1f1f1"/></svg>
<div class="a" style="left:8px;top:803px;width:784px;height:49px;background:#fff;border-top:1px solid #d4d6da;box-sizing:border-box;"></div>
<svg class="a" style="left:27px;top:819px;" width="18" height="17" viewBox="0 0 18 17"><path d="M4.500 .5h8.500l4 4V16.500H4.500z" fill="#fff" stroke="#8a8a8a" stroke-width="1"/><rect x="0" y="4" width="10.500" height="9.500" fill="#1a5dbe"/></svg>
<div class="t" style="top:825.35px;font-size:8.5px;left:28.3px;font-weight:700;color:#fff;">W</div>
<svg class="a" style="left:36px;top:828px;" width="9" height="9" viewBox="0 0 9 9"><path d="M1 1.500h6.500v5H4.500L2 8.500V6.500H1z" fill="#fff" stroke="#1a5dbe" stroke-width="1.300"/></svg>
<svg class="a" style="left:255px;top:819px;" width="18" height="17" viewBox="0 0 18 17"><path d="M4.500 .5h8.500l4 4V16.500H4.500z" fill="#fff" stroke="#1a5dbe" stroke-width="1"/><path d="M11.500 6.500h4M11.500 9h4M11.500 11.500h4" stroke="#1a5dbe" stroke-width=".9"/><rect x="0" y="4" width="10.500" height="9.500" fill="#1a5dbe"/></svg>
<div class="t" style="top:825.35px;font-size:8.5px;left:256.3px;font-weight:700;color:#fff;">W</div>
<div class="t" style="top:822.89px;font-size:12px;left:57.5px;color:#3c4043;letter-spacing:-0.326px;">13038_1.docm</div>
<div class="t" style="top:822.89px;font-size:12px;left:285px;color:#3c4043;letter-spacing:-0.285px;">13939.doc</div>
<svg class="a" style="left:210px;top:824px;" width="10" height="7" viewBox="0 0 10 7"><path d="M.8 6 5 1.500 9.200 6" fill="none" stroke="#5f6368" stroke-width="1.500"/></svg>
<svg class="a" style="left:436.5px;top:824px;" width="10" height="7" viewBox="0 0 10 7"><path d="M.8 6 5 1.500 9.200 6" fill="none" stroke="#5f6368" stroke-width="1.500"/></svg>
<div class="a" style="left:238px;top:811px;width:1px;height:34px;background:#dadce0;"></div>
<div class="a" style="left:465px;top:811px;width:1px;height:34px;background:#dadce0;"></div>
<div class="a" style="left:650px;top:811.5px;width:105px;height:31px;background:#fff;border:1px solid #dadce0;border-radius:4px;box-sizing:border-box;"></div>
<div class="t" style="top:822.39px;font-size:12px;left:666px;color:#3c4043;letter-spacing:0.061px;">Показать все</div>
<svg class="a" style="left:769px;top:822px;" width="10" height="10" viewBox="0 0 10 10"><path d="M.7 .7 9.300 9.300M9.300 .7 .7 9.300" stroke="#5f6368" stroke-width="1.600"/></svg>
<div class="a" style="left:800px;top:0px;width:1px;height:859px;background:#8a8a8a;"></div>
<div class="a" style="left:801px;top:0px;width:799px;height:1px;background:#8d8a85;"></div>
<div class="a" style="left:801px;top:1px;width:799px;height:34px;background:#2b579a;"></div>
<svg class="a" style="left:801px;top:1px;" width="799" height="34" viewBox="0 0 799 34"><circle cx="393" cy="10" r="5" fill="#284f8c"/><circle cx="372" cy="30" r="6" fill="#284f8c"/><circle cx="432" cy="27" r="5" fill="#284f8c"/><circle cx="700" cy="30" r="11" fill="#284f8c"/><circle cx="770" cy="8" r="8" fill="#284f8c"/><circle cx="655" cy="20" r="3" fill="#284f8c"/><circle cx="520" cy="8" r="3" fill="#284f8c"/><circle cx="560" cy="30" r="2.5" fill="#284f8c"/><circle cx="735" cy="12" r="2.5" fill="#284f8c"/><circle cx="610" cy="6" r="6" fill="#284f8c"/><circle cx="480" cy="28" r="7" fill="#284f8c"/><circle cx="590" cy="32" r="5" fill="#284f8c"/><circle cx="795" cy="30" r="4" fill="#284f8c"/></svg>
<div class="a" style="left:801px;top:34px;width:799px;height:1px;background:#244b8c;"></div>
<div class="a" style="left:801px;top:35px;width:799px;height:126px;background:#f3f2f1;"></div>
<div class="a" style="left:801px;top:161px;width:799px;height:677px;background:#e6e6e6;"></div>
<div class="a" style="left:801px;top:161px;width:799px;height:4px;background:linear-gradient(#d0d0d0,#e6e6e6);"></div>
<div class="t" style="top:12.25px;font-size:11.7px;left:824px;color:#b7c6e2;letter-spacing:0.064px;">Автосохранение</div>
<div class="a" style="left:921px;top:9.5px;width:38px;height:16px;border:1.300px solid #fff;border-radius:9px;box-sizing:border-box;"></div>
<div class="a" style="left:925.5px;top:14px;width:7px;height:7px;background:#fff;border-radius:4px;"></div>
<svg class="a" style="left:974px;top:10.4px;" width="16" height="17" viewBox="0 0 16 17"><path d="M.7 .7h12.300l2.300 2.300V16.300H.7z" fill="none" stroke="#b7c6e2" stroke-width="1.100"/><path d="M3.500 1v5h8V1M3.500 16V10h9v6" fill="none" stroke="#b7c6e2" stroke-width="1.100"/></svg>
<svg class="a" style="left:1004px;top:10.4px;" width="14" height="17" viewBox="0 0 14 17"><path d="M1 1v6h6" fill="none" stroke="#b7c6e2" stroke-width="1.150"/><path d="M1.500 6.500C4 2 10 2 12 6.500c1 3-2 7-7 10" fill="none" stroke="#b7c6e2" stroke-width="1.150"/></svg>
<svg class="a" style="left:1023.2px;top:16.5px;" width="5" height="3.2" viewBox="0 0 5 3.2"><path d="M0 0h5L2.5 3z" fill="#eef2fa"/></svg>
<svg class="a" style="left:1037px;top:10.4px;" width="17" height="17" viewBox="0 0 17 17"><path d="M2.300 5.500A7.300 7.300 0 1 0 8.500 1.700" fill="none" stroke="#8fa6cf" stroke-width="1.150"/><path d="M1.200 .8v5h5" fill="none" stroke="#8fa6cf" stroke-width="1.150"/></svg>
<svg class="a" style="left:1067px;top:10.4px;" width="16" height="17" viewBox="0 0 16 17"><rect x=".7" y=".7" width="14.600" height="12" fill="none" stroke="#b7c6e2" stroke-width="1.050"/><path d="M.7 3.500h14.600M3 6.500h6M3 9.500h4" stroke="#b7c6e2" stroke-width="1.100"/><rect x="8" y="7.500" width="6.500" height="8.500" fill="#2b579a" stroke="#b7c6e2" stroke-width="1.100"/><path d="M9.500 10h3.500M9.500 12.500h3.500" stroke="#b7c6e2" stroke-width=".9"/></svg>
<svg class="a" style="left:1094px;top:10.4px;" width="14" height="17" viewBox="0 0 14 17"><rect x=".7" y=".7" width="12.600" height="15.600" fill="none" stroke="#b7c6e2" stroke-width="1.050"/><path d="M3.700 .7v15.600M10.300 .7v15.600M.7 3.700h12.600M.7 13.300h12.600" stroke="#b7c6e2" stroke-width="1"/></svg>
<svg class="a" style="left:1115.0px;top:16.5px;" width="5" height="3.2" viewBox="0 0 5 3.2"><path d="M0 0h5L2.5 3z" fill="#eef2fa"/></svg>
<svg class="a" style="left:1135px;top:15.5px;" width="7" height="6" viewBox="0 0 7 6"><path d="M0 0l3 3-3 3zM3.800 0l3 3-3 3z" fill="#eef2fa"/></svg>
<div class="t" style="top:12.25px;font-size:11.7px;left:1177.5px;color:#c5d2e8;letter-spacing:-0.445px;">все...</div>
<div class="t" style="top:12.95px;font-size:11.7px;left:1265.5px;color:#dfe6f2;letter-spacing:-0.016px;">Мария Карнаухова</div>
<div class="a" style="left:1379px;top:5.5px;width:24px;height:24px;background:#d2d0ce;border-radius:12px;"></div>
<svg class="a" style="left:1384px;top:9px;" width="14" height="16" viewBox="0 0 14 16"><circle cx="7" cy="5" r="3.400" fill="none" stroke="#3b3a39" stroke-width="1.200"/><path d="M1 15.500c.3-4 2.500-6 6-6s5.700 2 6 6" fill="none" stroke="#3b3a39" stroke-width="1.200"/></svg>
<svg class="a" style="left:1430.5px;top:12px;" width="14" height="11" viewBox="0 0 14 11"><rect x=".5" y=".5" width="13" height="10" fill="none" stroke="#6f8cc0" stroke-width="1"/><path d="M.5 3h13M7 9V5M5 6.500 7 4.500 9 6.500" fill="none" stroke="#6f8cc0" stroke-width="1"/></svg>
<div class="a" style="left:1479px;top:17px;width:10px;height:1px;background:#7f99c8;"></div>
<div class="a" style="left:1525px;top:12.5px;width:10px;height:10px;border:1px solid #7f99c8;box-sizing:border-box;"></div>
<svg class="a" style="left:1571px;top:12.5px;" width="10" height="10" viewBox="0 0 10 10"><path d="M0 0 10 10M10 0 0 10" stroke="#7f99c8" stroke-width="1"/></svg>
<div class="t" style="top:45.22px;font-size:12.2px;left:813px;color:#444;letter-spacing:-0.117px;">Файл</div>
<div class="t" style="top:45.22px;font-size:12.2px;left:919px;color:#444;letter-spacing:-0.045px;">Вставка</div>
<div class="t" style="top:45.22px;font-size:12.2px;left:978px;color:#444;letter-spacing:0.199px;">Конструı</div>
<div class="t" style="top:45.22px;font-size:12.2px;left:1039px;color:#444;letter-spacing:0.5px;">Макет</div>
<div class="t" style="top:45.22px;font-size:12.2px;left:1090px;color:#444;letter-spacing:-0.068px;">Ссылки</div>
<div class="t" style="top:45.22px;font-size:12.2px;left:1146px;color:#444;letter-spacing:-0.16px;">Рассылкı</div>
<div class="t" style="top:45.22px;font-size:12.2px;left:1205.5px;color:#444;letter-spacing:-0.189px;">Рецензиı</div>
<div class="t" style="top:45.22px;font-size:12.2px;left:1266px;color:#444;letter-spacing:-0.354px;">Вид</div>
<div class="t" style="top:45.22px;font-size:12.2px;left:1299px;color:#444;letter-spacing:0.536px;">MathTyp</div>
<div class="t" style="top:45.22px;font-size:12.2px;left:1358px;color:#444;letter-spacing:0.241px;">Справка</div>
<div class="t" style="top:45.22px;font-size:12.2px;left:1450px;color:#444;letter-spacing:0.444px;">Поиск</div>
<div class="t" style="top:45.22px;font-size:12.2px;left:861px;font-weight:700;color:#333;letter-spacing:-0.083px;">Главная</div>
<div class="a" style="left:861px;top:60px;width:49px;height:2.5px;background:#2b579a;"></div>
<div class="a" style="left:914.0px;top:41px;width:1px;height:17px;background:#d6d4d2;"></div>
<div class="a" style="left:972.5px;top:41px;width:1px;height:17px;background:#d6d4d2;"></div>
<div class="a" style="left:1032.0px;top:41px;width:1px;height:17px;background:#d6d4d2;"></div>
<div class="a" style="left:1082.0px;top:41px;width:1px;height:17px;background:#d6d4d2;"></div>
<div class="a" style="left:1140.5px;top:41px;width:1px;height:17px;background:#d6d4d2;"></div>
<div class="a" style="left:1199.5px;top:41px;width:1px;height:17px;background:#d6d4d2;"></div>
<div class="a" style="left:1259.0px;top:41px;width:1px;height:17px;background:#d6d4d2;"></div>
<div class="a" style="left:1293.5px;top:41px;width:1px;height:17px;background:#d6d4d2;"></div>
<div class="a" style="left:1352.5px;top:41px;width:1px;height:17px;background:#d6d4d2;"></div>
<div class="a" style="left:1412.0px;top:41px;width:1px;height:17px;background:#d6d4d2;"></div>
<svg class="a" style="left:1424px;top:43.5px;" width="14" height="15" viewBox="0 0 14 15"><circle cx="8.500" cy="5.500" r="4.500" fill="none" stroke="#555" stroke-width="1.200"/><path d="M5.300 8.700.7 14" stroke="#555" stroke-width="1.300"/></svg>
<div class="a" style="left:1515.5px;top:38.5px;width:31px;height:22.5px;background:#fff;border:1px solid #e1dfdd;border-radius:2px;box-sizing:border-box;"></div>
<svg class="a" style="left:1525px;top:44px;" width="13" height="12" viewBox="0 0 15.500 14"><path d="M1 5.500V13h11V9" fill="none" stroke="#2b579a" stroke-width="1.200"/><path d="M4.500 9.500c0-4 3-5.500 6.500-5.500V1.500L14.500 5 11 8.500V6c-3 0-5 .5-6.500 3.500z" fill="none" stroke="#2b579a" stroke-width="1.100"/></svg>
<div class="a" style="left:1555.5px;top:38.5px;width:31px;height:22.5px;background:#fff;border:1px solid #e1dfdd;border-radius:2px;box-sizing:border-box;"></div>
<svg class="a" style="left:1565.5px;top:44.5px;" width="11" height="11" viewBox="0 0 11 11"><path d="M.7 .7h9.600v6.600H5L2.700 9.600V7.300H.7z" fill="none" stroke="#2b579a" stroke-width="1.200"/></svg>
<svg class="a" style="left:827px;top:72px;" width="29" height="32" viewBox="0 0 29 32"><rect x="1.500" y="5.500" width="20" height="23" fill="#fff" stroke="#e07b1a" stroke-width="1.200"/><rect x="2.700" y="6.700" width="17.600" height="20.600" fill="none" stroke="#ffe3ad" stroke-width="1.200"/><path d="M5.500 8.500V5.500h2.300c.3-3.500 6.100-3.500 6.400 0h2.300v3z" fill="#fafafa" stroke="#666" stroke-width="1"/><rect x="14.500" y="13.500" width="13" height="17" fill="#fafafa" stroke="#333" stroke-width="1.300"/></svg>
<div class="t" style="top:109.32px;font-size:11.5px;left:815.5px;color:#444;letter-spacing:-0.219px;">Вставить</div>
<svg class="a" style="left:836.3px;top:128.0px;" width="5.4" height="3.2" viewBox="0 0 5.4 3.2"><path d="M0 0h5.4L2.7 3z" fill="#555"/></svg>
<svg class="a" style="left:872px;top:72px;" width="11" height="16" viewBox="0 0 11 16"><path d="M2.500 0 8 10.500M8.500 0 3 10.500" stroke="#aaa" stroke-width="1.100"/><circle cx="2.500" cy="13" r="2" fill="none" stroke="#aaa" stroke-width="1"/><circle cx="8.500" cy="13" r="2" fill="none" stroke="#aaa" stroke-width="1"/></svg>
<svg class="a" style="left:869px;top:96px;" width="17" height="16" viewBox="0 0 17 16"><path d="M.6 .6h6l2.500 2.500V11H.6z" fill="#f3f2f1" stroke="#aaa" stroke-width="1"/><path d="M6 4.500h6.500l3 3V15.500H6z" fill="#f3f2f1" stroke="#aaa" stroke-width="1"/><path d="M8 9h5M8 11.500h5" stroke="#aaa" stroke-width=".9"/></svg>
<svg class="a" style="left:869px;top:120px;" width="17" height="16" viewBox="0 0 17 16"><path d="M9.500 7 14 1.500l2 1.500-4.500 5.500" fill="#fff" stroke="#555" stroke-width="1"/><path d="M.7 8.500 9 5l3.500 4.500-5 6z" fill="#fff" stroke="#e8812a" stroke-width="1.300"/><path d="M3 10.500l5 4M5.500 9l4.500 4" stroke="#e8812a" stroke-width="1"/></svg>
<div class="t" style="top:147.32px;font-size:11.5px;left:804.5px;color:#444;letter-spacing:-0.18px;">Буфер обмена</div>
<svg class="a" style="left:889px;top:150px;" width="7" height="7" viewBox="0 0 7 7"><path d="M.5 5V.5H5" fill="none" stroke="#666" stroke-width="1"/><path d="M2.500 2.500 6 6M6.500 3v3.500H3" fill="none" stroke="#666" stroke-width="1"/></svg>
<div class="a" style="left:900px;top:69px;width:1px;height:88px;background:#d2d0ce;"></div>
<div class="a" style="left:909px;top:69px;width:131.5px;height:22.5px;background:#fff;border:1px solid #c8c6c4;box-sizing:border-box;"></div>
<div class="a" style="left:1040.5px;top:69px;width:55px;height:22.5px;background:#fff;border:1px solid #c8c6c4;border-left:none;box-sizing:border-box;"></div>
<div class="t" style="top:75.39px;font-size:12px;left:912.5px;color:#333;letter-spacing:-0.074px;">Calibri (Основной теı</div>
<svg class="a" style="left:1030.3px;top:79.0px;" width="5.4" height="3.2" viewBox="0 0 5.4 3.2"><path d="M0 0h5.4L2.7 3z" fill="#555"/></svg>
<svg class="a" style="left:1085.3px;top:79.0px;" width="5.4" height="3.2" viewBox="0 0 5.4 3.2"><path d="M0 0h5.4L2.7 3z" fill="#555"/></svg>
<div class="t" style="top:75.39px;font-size:12px;left:1044.5px;color:#333;letter-spacing:-0.484px;">11</div>
<div class="t" style="top:96.35px;font-size:15px;left:913px;font-weight:700;color:#333;">Ж</div>
<div class="t" style="top:96.78px;font-size:14.5px;left:937.5px;color:#444;font-style:italic;">К</div>
<div class="t" style="top:96.7px;font-size:14px;left:959.5px;color:#444;text-decoration:underline;text-underline-offset:2px;">Ч</div>
<svg class="a" style="left:977.8px;top:102.5px;" width="5.4" height="3.2" viewBox="0 0 5.4 3.2"><path d="M0 0h5.4L2.7 3z" fill="#555"/></svg>
<div class="t" style="top:97.97px;font-size:12.5px;left:991px;color:#555;letter-spacing:0.047px;text-decoration:line-through;">ab</div>
<div class="t" style="top:96.7px;font-size:14px;left:1016px;font-weight:700;color:#444;">x</div>
<div class="t" style="top:106.12px;font-size:7px;left:1024px;font-weight:700;color:#2d7fd3;">2</div>
<div class="t" style="top:96.7px;font-size:14px;left:1039px;font-weight:700;color:#444;">x</div>
<div class="t" style="top:96.12px;font-size:7px;left:1046.5px;font-weight:700;color:#2d7fd3;">2</div>
<div class="a" style="left:1057px;top:95px;width:1px;height:20px;background:#d2d0ce;"></div>
<div class="t" style="top:95.16px;font-size:17px;left:1065px;color:#444;">A</div>
<svg class="a" style="left:1072px;top:103px;" width="9" height="9" viewBox="0 0 9 9"><path d="M3.500 .5 8.500 4 5 8.500 .5 5z" fill="#fff" stroke="#a33fc0" stroke-width="1.100"/><path d="M.5 5 3 2 7 5.500 5 8.500z" fill="#c77be0"/></svg>
<div class="t" style="top:120.39px;font-size:18.5px;left:912px;font-weight:700;color:#fff;-webkit-text-stroke:1.700px #1f78d1;text-shadow:0 0 2px #8cc3f7;paint-order:stroke fill;">A</div>
<svg class="a" style="left:931.8px;top:128.0px;" width="5.4" height="3.2" viewBox="0 0 5.4 3.2"><path d="M0 0h5.4L2.7 3z" fill="#555"/></svg>
<svg class="a" style="left:945px;top:119px;" width="16" height="13" viewBox="0 0 16 13"><path d="M8 9 13 1.500l2 1.300-5 7.700z" fill="none" stroke="#555" stroke-width="1.100"/><path d="M5 12l3-3 2 1.500-2 2z" fill="#555"/></svg>
<div class="a" style="left:945px;top:132px;width:16px;height:4px;background:#ffef00;"></div>
<svg class="a" style="left:966.8px;top:128.0px;" width="5.4" height="3.2" viewBox="0 0 5.4 3.2"><path d="M0 0h5.4L2.7 3z" fill="#555"/></svg>
<div class="t" style="top:119.28px;font-size:14.5px;left:981px;color:#444;">A</div>
<div class="a" style="left:979px;top:132px;width:16px;height:4px;background:#e81123;"></div>
<svg class="a" style="left:1000.3px;top:128.0px;" width="5.4" height="3.2" viewBox="0 0 5.4 3.2"><path d="M0 0h5.4L2.7 3z" fill="#555"/></svg>
<div class="t" style="top:123.12px;font-size:13.5px;left:1013px;color:#444;letter-spacing:-0.258px;">Aa</div>
<svg class="a" style="left:1032.3px;top:128.0px;" width="5.4" height="3.2" viewBox="0 0 5.4 3.2"><path d="M0 0h5.4L2.7 3z" fill="#555"/></svg>
<div class="a" style="left:1047.5px;top:119px;width:1px;height:20px;background:#d2d0ce;"></div>
<div class="t" style="top:122.7px;font-size:14px;left:1058px;color:#444;">A</div>
<svg class="a" style="left:1066px;top:121px;" width="5" height="4" viewBox="0 0 5 4"><path d="M.5 3.500 2.500 1 4.500 3.500" fill="none" stroke="#2d7fd3" stroke-width="1.200"/></svg>
<div class="t" style="top:123.55px;font-size:13px;left:1080px;color:#444;">A</div>
<svg class="a" style="left:1088px;top:121px;" width="5" height="4" viewBox="0 0 5 4"><path d="M.5 .5 2.500 3 4.500 .5" fill="none" stroke="#2d7fd3" stroke-width="1.200"/></svg>
<div class="t" style="top:147.32px;font-size:11.5px;left:974px;color:#444;letter-spacing:0.131px;">Шрифт</div>
<svg class="a" style="left:1092.5px;top:150px;" width="7" height="7" viewBox="0 0 7 7"><path d="M.5 5V.5H5" fill="none" stroke="#666" stroke-width="1"/><path d="M2.500 2.500 6 6M6.500 3v3.500H3" fill="none" stroke="#666" stroke-width="1"/></svg>
<div class="a" style="left:1104px;top:69px;width:1px;height:88px;background:#d2d0ce;"></div>
<svg class="a" style="left:1100px;top:60px" width="180" height="80" viewBox="0 0 180 80"><rect x="15" y="12.0" width="3" height="3" fill="#2d7fd3"/><rect x="15" y="18.0" width="3" height="3" fill="#2d7fd3"/><rect x="15" y="24.0" width="3" height="3" fill="#2d7fd3"/><path d="M20.2 13.5H30" stroke="#444" stroke-width="1.2"/><path d="M20.2 19.5H30" stroke="#444" stroke-width="1.2"/><path d="M20.2 25.5H30" stroke="#444" stroke-width="1.2"/><path d="M54.3 13.5H64" stroke="#444" stroke-width="1.2"/><path d="M54.3 19.5H64" stroke="#444" stroke-width="1.2"/><path d="M54.3 25.5H64" stroke="#444" stroke-width="1.2"/><path d="M88 13.5H98" stroke="#444" stroke-width="1.2"/><path d="M91 19.5H98" stroke="#444" stroke-width="1.2"/><path d="M94 25.5H98" stroke="#444" stroke-width="1.2"/><rect x="91" y="23.500" width="1.200" height="3.500" fill="#2d7fd3"/><rect x="91" y="21.800" width="1.200" height="1" fill="#2d7fd3"/></svg>
<div class="t" style="top:71.35px;font-size:6.5px;left:1149px;font-weight:700;color:#2d7fd3;">1</div>
<div class="t" style="top:77.35px;font-size:6.5px;left:1149px;font-weight:700;color:#2d7fd3;">2</div>
<div class="t" style="top:83.35px;font-size:6.5px;left:1149px;font-weight:700;color:#2d7fd3;">3</div>
<div class="t" style="top:71.35px;font-size:6.5px;left:1182.8px;font-weight:700;color:#2d7fd3;">1</div>
<div class="t" style="top:77.05px;font-size:6.5px;left:1185.5px;font-weight:700;color:#2d7fd3;">a</div>
<svg class="a" style="left:1136.7px;top:79.0px;" width="5.4" height="3.2" viewBox="0 0 5.4 3.2"><path d="M0 0h5.4L2.7 3z" fill="#555"/></svg>
<svg class="a" style="left:1170.6px;top:79.0px;" width="5.4" height="3.2" viewBox="0 0 5.4 3.2"><path d="M0 0h5.4L2.7 3z" fill="#555"/></svg>
<svg class="a" style="left:1202.8px;top:79.0px;" width="5.4" height="3.2" viewBox="0 0 5.4 3.2"><path d="M0 0h5.4L2.7 3z" fill="#555"/></svg>
<div class="a" style="left:1217px;top:70px;width:1px;height:21px;background:#d2d0ce;"></div>
<svg class="a" style="left:1225.5px;top:72px;" width="15" height="15" viewBox="0 0 15 15"><path d="M0 1.500H14.500M0 13.500H14.500M8.500 5.500H14.500M8.500 9.500H14.500" stroke="#444" stroke-width="1.200"/><path d="M6.500 7.500H1M3.500 5 1 7.500 3.500 10" fill="none" stroke="#2d7fd3" stroke-width="1.200"/></svg>
<svg class="a" style="left:1247.5px;top:72px;" width="15" height="15" viewBox="0 0 15 15"><path d="M0 1.500H14.500M0 13.500H14.500M8.500 5.500H14.500M8.500 9.500H14.500" stroke="#444" stroke-width="1.200"/><path d="M0 7.500H5.500M3 5 5.500 7.500 3 10" fill="none" stroke="#2d7fd3" stroke-width="1.200"/></svg>
<div class="a" style="left:1112px;top:93px;width:22px;height:23px;background:#c8c6c4;"></div>
<svg class="a" style="left:1100px;top:60px" width="180" height="80" viewBox="0 0 180 80"><path d="M16 37.5H30" stroke="#444" stroke-width="1.2"/><path d="M16 41.5H26" stroke="#444" stroke-width="1.2"/><path d="M16 45.5H30" stroke="#444" stroke-width="1.2"/><path d="M16 49.5H26" stroke="#444" stroke-width="1.2"/><path d="M38 37.5H52" stroke="#444" stroke-width="1.2"/><path d="M40 41.5H50" stroke="#444" stroke-width="1.2"/><path d="M38 45.5H52" stroke="#444" stroke-width="1.2"/><path d="M40 49.5H50" stroke="#444" stroke-width="1.2"/><path d="M60 37.5H74" stroke="#444" stroke-width="1.2"/><path d="M64.2 41.5H74" stroke="#444" stroke-width="1.2"/><path d="M60 45.5H74" stroke="#444" stroke-width="1.2"/><path d="M64.2 49.5H74" stroke="#444" stroke-width="1.2"/><path d="M82 37.5H96" stroke="#444" stroke-width="1.2"/><path d="M82 41.5H96" stroke="#444" stroke-width="1.2"/><path d="M82 45.5H96" stroke="#444" stroke-width="1.2"/><path d="M82 49.5H96" stroke="#444" stroke-width="1.2"/></svg>
<div class="a" style="left:1204px;top:95px;width:1px;height:20px;background:#d2d0ce;"></div>
<svg class="a" style="left:1211px;top:96px;" width="18" height="16" viewBox="0 0 18 16"><path d="M3 1V15M.5 3.500 3 1 5.500 3.500M.5 12.500 3 15 5.500 12.500" fill="none" stroke="#2d7fd3" stroke-width="1.200"/><path d="M8 1.500H17M8 5.500H17M8 9.500H17M8 13.500H17" stroke="#444" stroke-width="1.200"/></svg>
<svg class="a" style="left:1231.7px;top:103.0px;" width="5.4" height="3.2" viewBox="0 0 5.4 3.2"><path d="M0 0h5.4L2.7 3z" fill="#555"/></svg>
<svg class="a" style="left:1115px;top:119px;" width="16" height="17" viewBox="0 0 16 17"><path d="M4 8.500 8.500 3l5 4.500-5 5.500z" fill="#fff" stroke="#444" stroke-width="1.100"/><path d="M7 4.500V2a1.800 1.800 0 0 1 3.600 0v3" fill="none" stroke="#444" stroke-width="1"/><path d="M13.500 8c1.500 2 1.500 3.500 0 4" fill="none" stroke="#2d7fd3" stroke-width="1.400"/><rect x=".5" y="14" width="15" height="2.500" fill="#fff" stroke="#888" stroke-width=".8"/></svg>
<svg class="a" style="left:1136.6px;top:128.0px;" width="5.4" height="3.2" viewBox="0 0 5.4 3.2"><path d="M0 0h5.4L2.7 3z" fill="#555"/></svg>
<svg class="a" style="left:1149px;top:119px;" width="16" height="17" viewBox="0 0 16 17"><path d="M.5 1.500H15.500M.5 8.500H15.500M.5 1V14M15.500 1V14M7.500 1V14" stroke="#444" stroke-width="1" stroke-dasharray="1 1.500"/><path d="M0 15.500H16" stroke="#111" stroke-width="1.400"/></svg>
<svg class="a" style="left:1170.7px;top:128.0px;" width="5.4" height="3.2" viewBox="0 0 5.4 3.2"><path d="M0 0h5.4L2.7 3z" fill="#555"/></svg>
<div class="a" style="left:1184px;top:119px;width:1px;height:20px;background:#d2d0ce;"></div>
<div class="t" style="top:119.01px;font-size:9.5px;left:1192px;font-weight:700;color:#2d7fd3;">А</div>
<div class="t" style="top:128.31px;font-size:9.5px;left:1192.5px;font-weight:700;color:#444;">Я</div>
<svg class="a" style="left:1201px;top:120px;" width="8" height="17" viewBox="0 0 8 17"><path d="M4 0V15.500M.5 12 4 15.500 7.500 12" fill="none" stroke="#444" stroke-width="1.200"/></svg>
<div class="a" style="left:1215px;top:119px;width:1px;height:20px;background:#d2d0ce;"></div>
<div class="t" style="top:122.35px;font-size:15px;left:1226px;font-weight:700;color:#333;">¶</div>
<div class="t" style="top:147.32px;font-size:11.5px;left:1164px;color:#444;letter-spacing:-0.053px;">Абзац</div>
<svg class="a" style="left:1262px;top:150px;" width="7" height="7" viewBox="0 0 7 7"><path d="M.5 5V.5H5" fill="none" stroke="#666" stroke-width="1"/><path d="M2.500 2.500 6 6M6.500 3v3.500H3" fill="none" stroke="#666" stroke-width="1"/></svg>
<div class="a" style="left:1273px;top:69px;width:1px;height:88px;background:#d2d0ce;"></div>
<div class="t" style="top:71.72px;font-size:32.4px;left:1288.3px;color:#4a4846;transform:scaleX(.82);transform-origin:left;">A</div>
<svg class="a" style="left:1294px;top:80px;" width="26" height="26" viewBox="0 0 26 26"><path d="M24.300 3.200c1.400 1-4.600 9.600-9.300 14.600l-2.600-2C15.800 10.600 23.100 2.300 24.300 3.200z" fill="#fff" stroke="#555" stroke-width="1"/><path d="M12.600 15.400c-3.600-1.200-6 1.400-5.800 4.300-1 1.100-2.600 1.700-4.300 1.500 3 3.100 11 3.100 12.600-3.800z" fill="#6aa9e6" stroke="#2d7fd3" stroke-width=".6"/></svg>
<div class="t" style="top:108.52px;font-size:11.5px;left:1286.5px;color:#444;letter-spacing:-0.028px;">Стили</div>
<svg class="a" style="left:1299.8px;top:128.0px;" width="5.4" height="3.2" viewBox="0 0 5.4 3.2"><path d="M0 0h5.4L2.7 3z" fill="#555"/></svg>
<div class="t" style="top:147.74px;font-size:11px;left:1278.5px;color:#444;letter-spacing:-0.241px;">Стили</div>
<svg class="a" style="left:1320px;top:150px;" width="7" height="7" viewBox="0 0 7 7"><path d="M.5 5V.5H5" fill="none" stroke="#666" stroke-width="1"/><path d="M2.500 2.500 6 6M6.500 3v3.500H3" fill="none" stroke="#666" stroke-width="1"/></svg>
<div class="a" style="left:1331px;top:69px;width:1px;height:88px;background:#d2d0ce;"></div>
<div class="a" style="left:1369px;top:69px;width:32px;height:30.5px;background:#fff;border:1px solid #c8c6c4;box-sizing:border-box;"></div>
<svg class="a" style="left:1377px;top:74.5px;" width="17" height="17" viewBox="0 0 17 17"><circle cx="10.500" cy="6.500" r="5" fill="none" stroke="#444" stroke-width="1.200"/><path d="M7 10 1 16" stroke="#444" stroke-width="1.300"/></svg>
<div class="t" style="top:106.82px;font-size:11.5px;left:1340.5px;color:#444;letter-spacing:0.046px;">Редактирование</div>
<svg class="a" style="left:1381.3px;top:126.0px;" width="5.4" height="3.2" viewBox="0 0 5.4 3.2"><path d="M0 0h5.4L2.7 3z" fill="#555"/></svg>
<div class="a" style="left:1437px;top:69px;width:1px;height:88px;background:#d2d0ce;"></div>
<svg class="a" style="left:1579.5px;top:149.5px;" width="10" height="7" viewBox="0 0 10 7"><path d="M.8 5.800 5 1.600 9.200 5.800" fill="none" stroke="#6a6a6a" stroke-width="2"/></svg>
<div class="a" style="left:824.5px;top:186px;width:757.5px;height:634px;background:#fff;"></div>
<div class="a" style="left:804.5px;top:166px;width:14.5px;height:13.5px;background:#f6f6f6;border:1px solid #efefef;box-sizing:border-box;"></div>
<svg class="a" style="left:809px;top:170px;" width="6" height="7" viewBox="0 0 6 7"><path d="M1 .5V5.500H5.500" fill="none" stroke="#666" stroke-width="1.500"/></svg>
<div class="a" style="left:824px;top:167px;width:24.6px;height:10px;background:#c6c6c6;"></div>
<div class="a" style="left:848.6px;top:167px;width:706.4px;height:10px;background:#fff;"></div>
<div class="a" style="left:1557px;top:167px;width:25px;height:10px;background:#c6c6c6;"></div>
<svg class="a" style="left:800px;top:0" width="800" height="190" viewBox="0 0 800 190"><path d="M28.5 170.500V175.500" stroke="#555" stroke-width="1"/><rect x="37.0" y="172.500" width="1.200" height="1.200" fill="#555"/><rect x="56.0" y="172.500" width="1.200" height="1.200" fill="#555"/><path d="M66.5 170.500V175.500" stroke="#555" stroke-width="1"/><rect x="75.0" y="172.500" width="1.200" height="1.200" fill="#555"/><rect x="94.0" y="172.500" width="1.200" height="1.200" fill="#555"/><path d="M104.5 170.500V175.500" stroke="#555" stroke-width="1"/><rect x="113.0" y="172.500" width="1.200" height="1.200" fill="#555"/><rect x="132.0" y="172.500" width="1.200" height="1.200" fill="#555"/><path d="M141.5 170.500V175.500" stroke="#555" stroke-width="1"/><rect x="151.0" y="172.500" width="1.200" height="1.200" fill="#555"/><rect x="170.0" y="172.500" width="1.200" height="1.200" fill="#555"/><path d="M179.5 170.500V175.500" stroke="#555" stroke-width="1"/><rect x="189.0" y="172.500" width="1.200" height="1.200" fill="#555"/><rect x="208.0" y="172.500" width="1.200" height="1.200" fill="#555"/><path d="M217.5 170.500V175.500" stroke="#555" stroke-width="1"/><rect x="226.0" y="172.500" width="1.200" height="1.200" fill="#555"/><rect x="245.0" y="172.500" width="1.200" height="1.200" fill="#555"/><path d="M255.5 170.500V175.500" stroke="#555" stroke-width="1"/><rect x="264.0" y="172.500" width="1.200" height="1.200" fill="#555"/><rect x="283.0" y="172.500" width="1.200" height="1.200" fill="#555"/><path d="M293.5 170.500V175.500" stroke="#555" stroke-width="1"/><rect x="302.0" y="172.500" width="1.200" height="1.200" fill="#555"/><rect x="321.0" y="172.500" width="1.200" height="1.200" fill="#555"/><path d="M330.5 170.500V175.500" stroke="#555" stroke-width="1"/><rect x="340.0" y="172.500" width="1.200" height="1.200" fill="#555"/><rect x="359.0" y="172.500" width="1.200" height="1.200" fill="#555"/><path d="M368.5 170.500V175.500" stroke="#555" stroke-width="1"/><rect x="378.0" y="172.500" width="1.200" height="1.200" fill="#555"/><rect x="397.0" y="172.500" width="1.200" height="1.200" fill="#555"/><path d="M406.5 170.500V175.500" stroke="#555" stroke-width="1"/><rect x="415.0" y="172.500" width="1.200" height="1.200" fill="#555"/><rect x="434.0" y="172.500" width="1.200" height="1.200" fill="#555"/><path d="M444.5 170.500V175.500" stroke="#555" stroke-width="1"/><rect x="453.0" y="172.500" width="1.200" height="1.200" fill="#555"/><rect x="472.0" y="172.500" width="1.200" height="1.200" fill="#555"/><path d="M482.5 170.500V175.500" stroke="#555" stroke-width="1"/><rect x="491.0" y="172.500" width="1.200" height="1.200" fill="#555"/><rect x="510.0" y="172.500" width="1.200" height="1.200" fill="#555"/><path d="M519.5 170.500V175.500" stroke="#555" stroke-width="1"/><rect x="529.0" y="172.500" width="1.200" height="1.200" fill="#555"/><rect x="548.0" y="172.500" width="1.200" height="1.200" fill="#555"/><path d="M557.5 170.500V175.500" stroke="#555" stroke-width="1"/><rect x="567.0" y="172.500" width="1.200" height="1.200" fill="#555"/><rect x="585.0" y="172.500" width="1.200" height="1.200" fill="#555"/><path d="M595.5 170.500V175.500" stroke="#555" stroke-width="1"/><rect x="604.0" y="172.500" width="1.200" height="1.200" fill="#555"/><rect x="623.0" y="172.500" width="1.200" height="1.200" fill="#555"/><path d="M633.5 170.500V175.500" stroke="#555" stroke-width="1"/><rect x="642.0" y="172.500" width="1.200" height="1.200" fill="#555"/><rect x="661.0" y="172.500" width="1.200" height="1.200" fill="#555"/><path d="M671.5 170.500V175.500" stroke="#555" stroke-width="1"/><rect x="680.0" y="172.500" width="1.200" height="1.200" fill="#555"/><rect x="699.0" y="172.500" width="1.200" height="1.200" fill="#555"/><path d="M708.5 170.500V175.500" stroke="#555" stroke-width="1"/><rect x="718.0" y="172.500" width="1.200" height="1.200" fill="#555"/><rect x="737.0" y="172.500" width="1.200" height="1.200" fill="#555"/><path d="M746.5 170.500V175.500" stroke="#555" stroke-width="1"/><rect x="756.0" y="172.500" width="1.200" height="1.200" fill="#555"/><rect x="774.0" y="172.500" width="1.200" height="1.200" fill="#555"/><path d="M44.500 164.500h8v3l-4 4.500-4-4.500zM44.500 179.500v-3l4-4.500 4 4.500v3zM44.500 179.500h8v6h-8z" fill="#fff" stroke="#8a8a8a" stroke-width="1"/><path d="M753.500 179.500v-3.500l4-4 4 4v3.500z" fill="#fff" stroke="#8a8a8a" stroke-width="1"/></svg>
<div class="t" style="left:876.4px;width:20px;text-align:center;top:169.13px;font-size:9.300px;color:#444;">1</div>
<div class="t" style="left:914.2px;width:20px;text-align:center;top:169.13px;font-size:9.300px;color:#444;">2</div>
<div class="t" style="left:952.0px;width:20px;text-align:center;top:169.13px;font-size:9.300px;color:#444;">3</div>
<div class="t" style="left:989.8px;width:20px;text-align:center;top:169.13px;font-size:9.300px;color:#444;">4</div>
<div class="t" style="left:1027.6px;width:20px;text-align:center;top:169.13px;font-size:9.300px;color:#444;">5</div>
<div class="t" style="left:1065.4px;width:20px;text-align:center;top:169.13px;font-size:9.300px;color:#444;">6</div>
<div class="t" style="left:1103.2px;width:20px;text-align:center;top:169.13px;font-size:9.300px;color:#444;">7</div>
<div class="t" style="left:1141.0px;width:20px;text-align:center;top:169.13px;font-size:9.300px;color:#444;">8</div>
<div class="t" style="left:1178.8px;width:20px;text-align:center;top:169.13px;font-size:9.300px;color:#444;">9</div>
<div class="t" style="left:1216.6px;width:20px;text-align:center;top:169.13px;font-size:9.300px;color:#444;">10</div>
<div class="t" style="left:1254.3px;width:20px;text-align:center;top:169.13px;font-size:9.300px;color:#444;">11</div>
<div class="t" style="left:1292.1px;width:20px;text-align:center;top:169.13px;font-size:9.300px;color:#444;">12</div>
<div class="t" style="left:1329.9px;width:20px;text-align:center;top:169.13px;font-size:9.300px;color:#444;">13</div>
<div class="t" style="left:1367.7px;width:20px;text-align:center;top:169.13px;font-size:9.300px;color:#444;">14</div>
<div class="t" style="left:1405.5px;width:20px;text-align:center;top:169.13px;font-size:9.300px;color:#444;">15</div>
<div class="t" style="left:1443.3px;width:20px;text-align:center;top:169.13px;font-size:9.300px;color:#444;">16</div>
<div class="t" style="left:1481.1px;width:20px;text-align:center;top:169.13px;font-size:9.300px;color:#444;">17</div>
<div class="t" style="left:1518.9px;width:20px;text-align:center;top:169.13px;font-size:9.300px;color:#444;">18</div>
<div class="t" style="left:1556.7px;width:20px;text-align:center;top:169.13px;font-size:9.300px;color:#444;">19</div>
<div class="a" style="left:806px;top:186px;width:11px;height:634px;background:#fff;"></div>
<svg class="a" style="left:800px;top:0" width="20" height="830" viewBox="0 0 20 830"><path d="M10.500 194.4H15.500" stroke="#555" stroke-width="1"/><rect x="12.400" y="203.3" width="1.200" height="1.200" fill="#555"/><rect x="12.400" y="222.1" width="1.200" height="1.200" fill="#555"/><path d="M10.500 232.2H15.500" stroke="#555" stroke-width="1"/><rect x="12.400" y="241.0" width="1.200" height="1.200" fill="#555"/><rect x="12.400" y="259.9" width="1.200" height="1.200" fill="#555"/><path d="M10.500 270.0H15.500" stroke="#555" stroke-width="1"/><rect x="12.400" y="278.8" width="1.200" height="1.200" fill="#555"/><rect x="12.400" y="297.7" width="1.200" height="1.200" fill="#555"/><path d="M10.500 307.8H15.500" stroke="#555" stroke-width="1"/><rect x="12.400" y="316.6" width="1.200" height="1.200" fill="#555"/><rect x="12.400" y="335.5" width="1.200" height="1.200" fill="#555"/><path d="M10.500 345.6H15.500" stroke="#555" stroke-width="1"/><rect x="12.400" y="354.4" width="1.200" height="1.200" fill="#555"/><rect x="12.400" y="373.3" width="1.200" height="1.200" fill="#555"/><path d="M10.500 383.4H15.500" stroke="#555" stroke-width="1"/><rect x="12.400" y="392.2" width="1.200" height="1.200" fill="#555"/><rect x="12.400" y="411.1" width="1.200" height="1.200" fill="#555"/><path d="M10.500 421.2H15.500" stroke="#555" stroke-width="1"/><rect x="12.400" y="430.0" width="1.200" height="1.200" fill="#555"/><rect x="12.400" y="448.9" width="1.200" height="1.200" fill="#555"/><path d="M10.500 459.0H15.500" stroke="#555" stroke-width="1"/><rect x="12.400" y="467.8" width="1.200" height="1.200" fill="#555"/><rect x="12.400" y="486.7" width="1.200" height="1.200" fill="#555"/><path d="M10.500 496.8H15.500" stroke="#555" stroke-width="1"/><rect x="12.400" y="505.6" width="1.200" height="1.200" fill="#555"/><rect x="12.400" y="524.5" width="1.200" height="1.200" fill="#555"/><path d="M10.500 534.6H15.500" stroke="#555" stroke-width="1"/><rect x="12.400" y="543.4" width="1.200" height="1.200" fill="#555"/><rect x="12.400" y="562.3" width="1.200" height="1.200" fill="#555"/><path d="M10.500 572.4H15.500" stroke="#555" stroke-width="1"/><rect x="12.400" y="581.2" width="1.200" height="1.200" fill="#555"/><rect x="12.400" y="600.1" width="1.200" height="1.200" fill="#555"/><path d="M10.500 610.1H15.500" stroke="#555" stroke-width="1"/><rect x="12.400" y="619.0" width="1.200" height="1.200" fill="#555"/><rect x="12.400" y="637.9" width="1.200" height="1.200" fill="#555"/><path d="M10.500 647.9H15.500" stroke="#555" stroke-width="1"/><rect x="12.400" y="656.8" width="1.200" height="1.200" fill="#555"/><rect x="12.400" y="675.7" width="1.200" height="1.200" fill="#555"/><path d="M10.500 685.7H15.500" stroke="#555" stroke-width="1"/><rect x="12.400" y="694.6" width="1.200" height="1.200" fill="#555"/><rect x="12.400" y="713.5" width="1.200" height="1.200" fill="#555"/><path d="M10.500 723.5H15.500" stroke="#555" stroke-width="1"/><rect x="12.400" y="732.4" width="1.200" height="1.200" fill="#555"/><rect x="12.400" y="751.3" width="1.200" height="1.200" fill="#555"/><path d="M10.500 761.3H15.500" stroke="#555" stroke-width="1"/><rect x="12.400" y="770.2" width="1.200" height="1.200" fill="#555"/><rect x="12.400" y="789.1" width="1.200" height="1.200" fill="#555"/><path d="M10.500 799.1H15.500" stroke="#555" stroke-width="1"/><rect x="12.400" y="808.0" width="1.200" height="1.200" fill="#555"/></svg>
<div class="t" style="left:802px;width:20px;height:10px;line-height:10px;text-align:center;top:208.3px;font-size:9.300px;color:#444;transform:rotate(-90deg);">10</div>
<div class="t" style="left:802px;width:20px;height:10px;line-height:10px;text-align:center;top:246.1px;font-size:9.300px;color:#444;transform:rotate(-90deg);">11</div>
<div class="t" style="left:802px;width:20px;height:10px;line-height:10px;text-align:center;top:283.9px;font-size:9.300px;color:#444;transform:rotate(-90deg);">12</div>
<div class="t" style="left:802px;width:20px;height:10px;line-height:10px;text-align:center;top:321.7px;font-size:9.300px;color:#444;transform:rotate(-90deg);">13</div>
<div class="t" style="left:802px;width:20px;height:10px;line-height:10px;text-align:center;top:359.5px;font-size:9.300px;color:#444;transform:rotate(-90deg);">14</div>
<div class="t" style="left:802px;width:20px;height:10px;line-height:10px;text-align:center;top:397.3px;font-size:9.300px;color:#444;transform:rotate(-90deg);">15</div>
<div class="t" style="left:802px;width:20px;height:10px;line-height:10px;text-align:center;top:435.1px;font-size:9.300px;color:#444;transform:rotate(-90deg);">16</div>
<div class="t" style="left:802px;width:20px;height:10px;line-height:10px;text-align:center;top:472.9px;font-size:9.300px;color:#444;transform:rotate(-90deg);">17</div>
<div class="t" style="left:802px;width:20px;height:10px;line-height:10px;text-align:center;top:510.7px;font-size:9.300px;color:#444;transform:rotate(-90deg);">18</div>
<div class="t" style="left:802px;width:20px;height:10px;line-height:10px;text-align:center;top:548.5px;font-size:9.300px;color:#444;transform:rotate(-90deg);">19</div>
<div class="t" style="left:802px;width:20px;height:10px;line-height:10px;text-align:center;top:586.2px;font-size:9.300px;color:#444;transform:rotate(-90deg);">20</div>
<div class="t" style="left:802px;width:20px;height:10px;line-height:10px;text-align:center;top:624.0px;font-size:9.300px;color:#444;transform:rotate(-90deg);">21</div>
<div class="t" style="left:802px;width:20px;height:10px;line-height:10px;text-align:center;top:661.8px;font-size:9.300px;color:#444;transform:rotate(-90deg);">22</div>
<div class="t" style="left:802px;width:20px;height:10px;line-height:10px;text-align:center;top:699.6px;font-size:9.300px;color:#444;transform:rotate(-90deg);">23</div>
<div class="t" style="left:802px;width:20px;height:10px;line-height:10px;text-align:center;top:737.4px;font-size:9.300px;color:#444;transform:rotate(-90deg);">24</div>
<div class="t" style="left:802px;width:20px;height:10px;line-height:10px;text-align:center;top:775.2px;font-size:9.300px;color:#444;transform:rotate(-90deg);">25</div>
<div class="t" style="left:802px;width:20px;height:10px;line-height:10px;text-align:center;top:813.0px;font-size:9.300px;color:#444;transform:rotate(-90deg);">26</div>
<div class="a" style="left:801px;top:820px;width:23px;height:17.5px;background:#e6e6e6;"></div>
<div class="a" style="left:848px;top:186px;width:1.2px;height:209px;background:#000;"></div>
<div class="a" style="left:1202px;top:186px;width:1.2px;height:209px;background:#000;"></div>
<div class="a" style="left:1556px;top:186px;width:1.2px;height:209px;background:#000;"></div>
<div class="a" style="left:848px;top:198px;width:709.2px;height:1.2px;background:#000;"></div>
<div class="a" style="left:848px;top:394px;width:709.2px;height:1.2px;background:#000;"></div>
<div class="t" style="top:182.91px;font-size:13.4px;left:857.5px;letter-spacing:0.006px;">получения актива.</div>
<div class="t" style="top:202.01px;font-size:13.4px;left:857.5px;letter-spacing:-0.034px;">4. Право собственности (владения, пользования и</div>
<div class="t" style="top:219.94px;font-size:13.4px;left:857.5px;letter-spacing:0.095px;">распоряжения) на продукцию перешло от</div>
<div class="t" style="top:237.87px;font-size:13.4px;left:857.5px;letter-spacing:0.069px;">организации к покупателю или работа принята</div>
<div class="t" style="top:255.8px;font-size:13.4px;left:857.5px;letter-spacing:0.005px;">заказчиком (услуга оказана). 5. Расходы, которые</div>
<div class="t" style="top:273.73px;font-size:13.4px;left:857.5px;letter-spacing:0.048px;">произведены или будут произведены в связи с этой</div>
<div class="t" style="top:291.66px;font-size:13.4px;left:857.5px;letter-spacing:-0.028px;">операцией, могут быть определены. Если в</div>
<div class="t" style="top:309.59px;font-size:13.4px;left:857.5px;letter-spacing:0.058px;">отношении денежных средств и иных активов,</div>
<div class="t" style="top:327.52px;font-size:13.4px;left:857.5px;letter-spacing:0.064px;">полученных организацией в оплату, не исполнено</div>
<div class="t" style="top:345.45px;font-size:13.4px;left:857.5px;letter-spacing:-0.021px;">хотя бы одно из условий, то в бухгалтерском учете</div>
<div class="t" style="top:363.38px;font-size:13.4px;left:857.5px;letter-spacing:0.014px;">признается не выручка, а кредиторская</div>
<div class="t" style="top:381.31px;font-size:13.4px;left:857.5px;letter-spacing:0.052px;">задолженность</div>
<div class="t" style="top:202.01px;font-size:13.4px;left:1211.3px;letter-spacing:-0.061px;">Если в отношении любых расходов, осуществленных</div>
<div class="t" style="top:219.94px;font-size:13.4px;left:1211.3px;letter-spacing:0.082px;">организацией, не исполнено хотя бы одно из</div>
<div class="t" style="top:237.87px;font-size:13.4px;left:1211.3px;letter-spacing:-0.028px;">названных условий, то в бухгалтерском учете</div>
<div class="t" style="top:255.8px;font-size:13.4px;left:1211.3px;letter-spacing:0.025px;">организации признаются не расходы, а дебиторская</div>
<div class="t" style="top:273.73px;font-size:13.4px;left:1211.3px;letter-spacing:0.047px;">задолженность.</div>
<div class="t" style="top:428.21px;font-size:13.4px;left:849.25px;letter-spacing:0.01px;">Чистая прибыль является важнейшим показателем, обобщающим результаты хозяйственной деятельности.</div>
<div class="t" style="top:447.56px;font-size:13.4px;left:849.25px;letter-spacing:0.062px;">Аналитическое значение этого показателя обусловлено разнообразными и многочисленными факторами его</div>
<div class="t" style="top:466.91px;font-size:13.4px;left:849.25px;letter-spacing:-0.011px;">формирования. Оценка роли этих факторов позволяет анализировать качество прибыли, реальный прирост</div>
<div class="t" style="top:486.26px;font-size:13.4px;left:849.25px;letter-spacing:0.019px;">капитала, прогнозировать изменение финансовых результатов, оценивать качество управленческих решений</div>
<div class="t" style="top:505.61px;font-size:13.4px;left:849.25px;letter-spacing:0.053px;">руководства организации в отчетном году. Значение показателя чистой прибыли обусловлено также и тем, что</div>
<div class="t" style="top:524.96px;font-size:13.4px;left:849.25px;letter-spacing:0.078px;">он показывает возможности и границы направления капитала организации на цели расширенного</div>
<div class="t" style="top:544.31px;font-size:13.4px;left:849.25px;letter-spacing:0.052px;">воспроизводства и выплату доходов собственникам (участникам и учредителям организации) по результатам</div>
<div class="t" style="top:563.66px;font-size:13.4px;left:849.25px;letter-spacing:0.03px;">отчетного года. Нераспределенная прибыль отчетного периода характеризует прирост капитала, достигнутый в</div>
<div class="t" style="top:583.01px;font-size:13.4px;left:849.25px;letter-spacing:0.032px;">отчетном году в результате ведения хозяйственной деятельности.</div>
<div class="a" style="left:801px;top:837.5px;width:799px;height:21.5px;background:#f3f2f1;border-top:1px solid #dddbd9;box-sizing:border-box;"></div>
<div class="t" style="top:842.02px;font-size:11.5px;left:809px;color:#444;letter-spacing:-0.118px;">Страница 44 из 45</div>
<div class="t" style="top:842.02px;font-size:11.5px;left:925px;color:#444;letter-spacing:-0.278px;">Число слов: 12675</div>
<svg class="a" style="left:1039px;top:842px;" width="15" height="12" viewBox="0 0 15 12"><path d="M.5 1h5l1.500 1V11L5.500 10H.5zM7 2 8.500 1H10M7 11l1.500-1H10" fill="none" stroke="#555" stroke-width="1"/><path d="M10 2.500l4 4M14 2.500l-4 4" stroke="#555" stroke-width="1.100"/></svg>
<div class="t" style="top:842.02px;font-size:11.5px;left:1071px;color:#444;letter-spacing:0.103px;">русский</div>
<svg class="a" style="left:1131px;top:841px;" width="14" height="13" viewBox="0 0 14 13"><circle cx="3" cy="3" r="2.800" fill="#444"/><rect x="3.500" y="3.500" width="10" height="9" fill="#fff" stroke="#444" stroke-width="1"/><path d="M7 .8h6.500v3H7z" fill="#444"/><path d="M5 7h7M5 9h7M5 11h7" stroke="#444" stroke-width=".9" stroke-dasharray="1.200 .8"/></svg>
<svg class="a" style="left:1311px;top:840px;" width="14" height="14" viewBox="0 0 14 14"><path d="M.5 1H6l1 1 1-1h5.500V11H8l-1 1-1-1H.5z" fill="none" stroke="#555" stroke-width="1"/><path d="M7 2V13M2 3.500H5.500M2 5.500H5.500M2 7.500H5.500M8.500 3.500H12M8.500 5.500H12M8.500 7.500H12" stroke="#555" stroke-width=".8"/></svg>
<div class="a" style="left:1337px;top:838px;width:38px;height:21px;background:#c8c6c4;"></div>
<svg class="a" style="left:1349px;top:841px;" width="14" height="13" viewBox="0 0 14 13"><rect x=".5" y=".5" width="13" height="12" fill="#fff" stroke="#555" stroke-width="1"/><path d="M2.500 3H11.500M2.500 5.200H11.500M2.500 7.400H11.500M2.500 9.600H11.500" stroke="#555" stroke-width=".9"/></svg>
<svg class="a" style="left:1387px;top:840px;" width="15" height="14" viewBox="0 0 15 14"><path d="M.5 .5H10.500V6M.5 .5V11H6" fill="none" stroke="#555" stroke-width="1"/><path d="M2.500 3H8.500M2.500 5.200H8M2.500 7.400H6" stroke="#555" stroke-width=".9"/><circle cx="10.500" cy="9.500" r="4" fill="#666"/><path d="M8.500 8c1 0 1.500.8 1.200 1.500s.8 1.200.5 2.300M11.500 6.500c-.5 1 .8 1.500 1.800 1.500" fill="none" stroke="#eee" stroke-width=".9"/></svg>
<div class="a" style="left:1417.5px;top:847.3px;width:6.5px;height:1.6px;background:#555;"></div>
<div class="a" style="left:1428px;top:847.8px;width:100px;height:1px;background:#8a8886;"></div>
<div class="a" style="left:1476px;top:842px;width:4.5px;height:11px;background:#6e6e6e;"></div>
<svg class="a" style="left:1531.5px;top:844.5px;" width="7" height="7" viewBox="0 0 7 7"><path d="M3.500 0V7M0 3.500H7" stroke="#555" stroke-width="1.500"/></svg>
<div class="t" style="top:842.02px;font-size:11.5px;left:1550.5px;color:#444;letter-spacing:-0.622px;">100 %</div>
<div class="a" style="left:1599px;top:0px;width:1px;height:859px;background:#8d8a85;"></div>
</body></html>
